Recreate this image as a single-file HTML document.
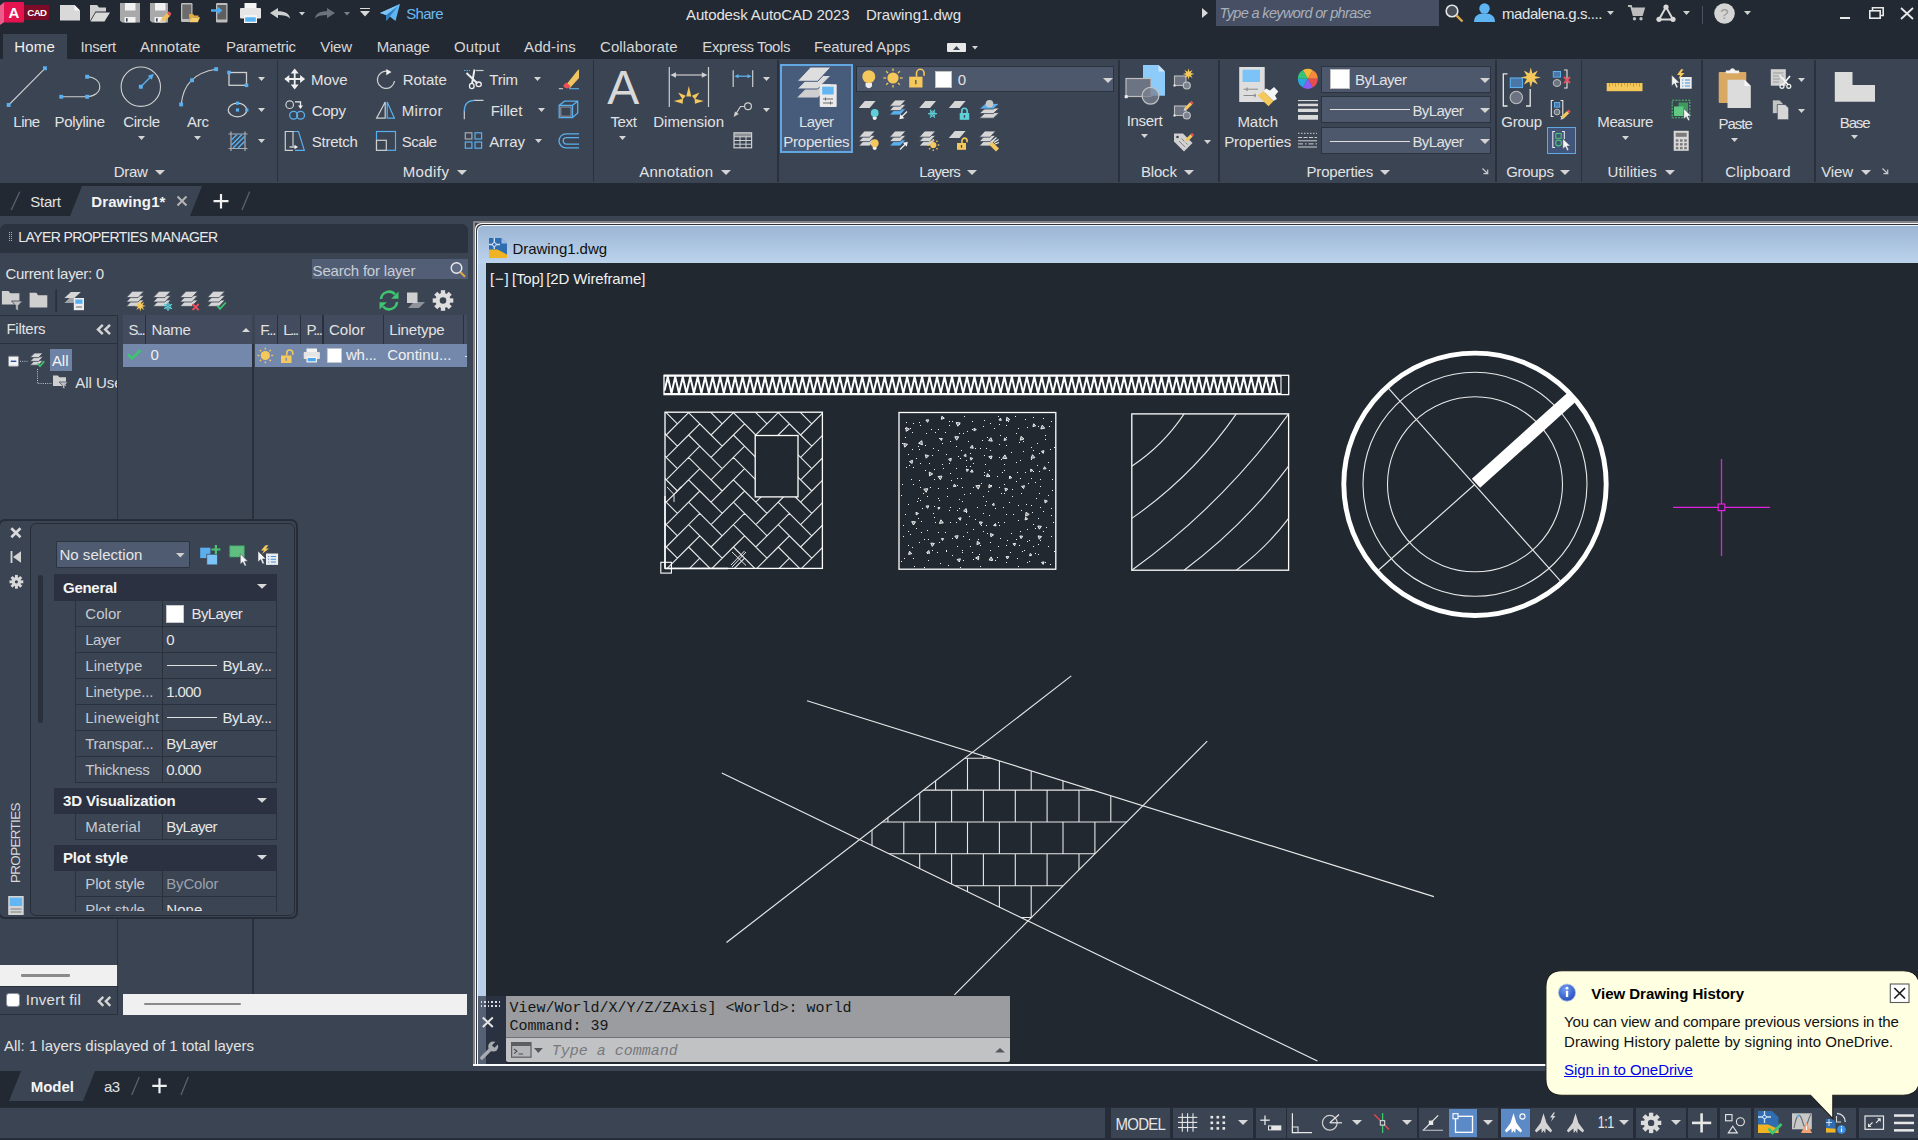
<!DOCTYPE html>
<html><head><meta charset="utf-8"><title>Autodesk AutoCAD 2023 Drawing1.dwg</title>
<style>
html,body{margin:0;padding:0}
body{width:1918px;height:1140px;position:relative;overflow:hidden;background:#3b4453;font-family:"Liberation Sans",sans-serif;}
.t{position:absolute;white-space:pre;display:block}
.r{position:absolute;display:block}
svg{overflow:visible}
</style></head><body>
<div class="r" style="left:0px;top:0px;width:1918px;height:59px;background:#222933;"></div>
<div class="r" style="left:3px;top:34px;width:64px;height:26px;background:#3b4453;"></div>
<div class="r" style="left:0px;top:183px;width:1918px;height:33px;background:#222933;"></div>
<svg class="r" style="left:0px;top:183px;" width="300" height="33" viewBox="0 0 300 33"><path d="M70 33L82 3H202L190 33Z" fill="#3b4453"/></svg>
<div class="r" style="left:0px;top:224px;width:468px;height:28.5px;background:#2c3340;border-radius:6px 6px 0 0;"></div>
<div class="r" style="left:473px;top:221px;width:1445px;height:842.8px;background:#858585;border-radius:1px 0 0 0;"></div>
<div class="r" style="left:475px;top:223px;width:1443px;height:840.8px;background:#f4f6f8;border-radius:5px 0 0 0;"></div>
<div class="r" style="left:475px;top:223px;width:6px;height:6px;background:#3d4350;"></div>
<div class="r" style="left:475px;top:223px;width:1443px;height:840.8px;background:#f4f6f8;border-radius:6px 0 0 0;"></div>
<div class="r" style="left:476px;top:224px;width:1442px;height:839.8px;background:#30353d;border-radius:6px 0 0 0;"></div>
<div class="r" style="left:477px;top:225px;width:1441px;height:838.8px;background:#f4f8fc;border-radius:6px 0 0 0;"></div>
<div class="r" style="left:478px;top:226px;width:1440px;height:837.8px;background:linear-gradient(#9bb5d4,#bcd3ec 37px,#b7cfe9 38px);border-radius:5px 0 0 0;"></div>
<div class="r" style="left:486px;top:263px;width:1432px;height:800.8px;background:#212830;"></div>
<div class="r" style="left:473px;top:1063.8px;width:1445px;height:2.3px;background:#fbfcfe;"></div>
<div class="r" style="left:0px;top:1070.6px;width:1918px;height:37px;background:#222933;"></div>
<svg class="r" style="left:0px;top:1070.6px;" width="120" height="37" viewBox="0 0 120 37"><path d="M9 30L21 0H95L83 30Z" fill="#3b4453"/></svg>
<span class="t" style="left:686.00px;top:7.30px;font-size:15px;line-height:15px;color:#e4e4e4;letter-spacing:-0.116px;">Autodesk AutoCAD 2023</span>
<span class="t" style="left:866.00px;top:7.30px;font-size:15px;line-height:15px;color:#e4e4e4;letter-spacing:-0.004px;">Drawing1.dwg</span>
<span class="t" style="left:406.30px;top:6.30px;font-size:15px;line-height:15px;color:#6db9f2;letter-spacing:-0.705px;">Share</span>
<div class="r" style="left:1216px;top:0px;width:223px;height:26px;background:#464f64;"></div>
<span class="t" style="left:1219.60px;top:5.73px;font-size:14.5px;line-height:14.5px;color:#aab0ba;letter-spacing:-0.648px;font-style:italic;">Type a keyword or phrase</span>
<svg class="r" style="left:1202px;top:8px;" width="6" height="10" viewBox="0 0 6 10"><path d="M0 0L6 5L0 10Z" fill="#d8d8d8"/></svg>
<span class="t" style="left:1502.00px;top:5.80px;font-size:15px;line-height:15px;color:#e4e4e4;letter-spacing:-0.420px;">madalena.g.s....</span>
<svg class="r" style="left:1606.5px;top:11px;" width="7" height="4" viewBox="0 0 7 4"><path d="M0 0H7L3.5 4Z" fill="#d0d0d0"/></svg>
<svg class="r" style="left:1682.5px;top:11px;" width="7" height="4" viewBox="0 0 7 4"><path d="M0 0H7L3.5 4Z" fill="#d0d0d0"/></svg>
<svg class="r" style="left:1744px;top:11px;" width="7" height="4" viewBox="0 0 7 4"><path d="M0 0H7L3.5 4Z" fill="#d0d0d0"/></svg>
<div class="r" style="left:1702px;top:6px;width:1px;height:18px;background:#4a5262;"></div>
<div class="r" style="left:1840px;top:17px;width:10px;height:2px;background:#e8e8e8;"></div>
<svg class="r" style="left:1869px;top:7px;" width="15" height="12" viewBox="0 0 15 12"><path d="M3.5 3V0.8H14.2V8.5H11.5" fill="none" stroke="#e8e8e8" stroke-width="1.6"/><rect x="0.8" y="3.8" width="10.4" height="7.4" fill="none" stroke="#e8e8e8" stroke-width="1.6"/></svg>
<svg class="r" style="left:1900px;top:7px;" width="14" height="13" viewBox="0 0 14 13"><path d="M1 1L13 12M13 1L1 12" stroke="#e8e8e8" stroke-width="1.8" fill="none"/></svg>
<span class="t" style="left:14.20px;top:38.60px;font-size:15px;line-height:15px;color:#f0f0f0;letter-spacing:0.197px;">Home</span>
<span class="t" style="left:80.50px;top:38.60px;font-size:15px;line-height:15px;color:#d6d6d6;letter-spacing:-0.369px;">Insert</span>
<span class="t" style="left:140.00px;top:38.60px;font-size:15px;line-height:15px;color:#d6d6d6;letter-spacing:0.056px;">Annotate</span>
<span class="t" style="left:226.00px;top:38.60px;font-size:15px;line-height:15px;color:#d6d6d6;letter-spacing:-0.272px;">Parametric</span>
<span class="t" style="left:320.30px;top:38.60px;font-size:15px;line-height:15px;color:#d6d6d6;letter-spacing:-0.136px;">View</span>
<span class="t" style="left:376.70px;top:38.60px;font-size:15px;line-height:15px;color:#d6d6d6;letter-spacing:-0.201px;">Manage</span>
<span class="t" style="left:454.00px;top:38.60px;font-size:15px;line-height:15px;color:#d6d6d6;letter-spacing:0.112px;">Output</span>
<span class="t" style="left:524.00px;top:38.60px;font-size:15px;line-height:15px;color:#d6d6d6;letter-spacing:0.134px;">Add-ins</span>
<span class="t" style="left:600.00px;top:38.60px;font-size:15px;line-height:15px;color:#d6d6d6;letter-spacing:0.090px;">Collaborate</span>
<span class="t" style="left:702.30px;top:38.60px;font-size:15px;line-height:15px;color:#d6d6d6;letter-spacing:-0.415px;">Express Tools</span>
<span class="t" style="left:814.00px;top:38.60px;font-size:15px;line-height:15px;color:#d6d6d6;letter-spacing:-0.120px;">Featured Apps</span>
<div class="r" style="left:947px;top:43px;width:19px;height:9px;background:#e8e8e8;border-radius:1px;"></div>
<svg class="r" style="left:953px;top:45.5px;" width="7" height="4" viewBox="0 0 7 4"><path d="M0 4H7L3.5 0Z" fill="#3b4453"/></svg>
<svg class="r" style="left:971.5px;top:45.5px;" width="6" height="3.5" viewBox="0 0 6 3.5"><path d="M0 0H6L3 3.5Z" fill="#d0d0d0"/></svg>
<svg class="r" style="left:0px;top:0px;" width="50" height="26" viewBox="0 0 50 26"><path d="M0 5.5L4 2.2V22.3L0 25Z" fill="#ea5c8b"/><rect x="4" y="2" width="20" height="20.5" rx="1" fill="#e5134f"/><rect x="24" y="5" width="25" height="15" fill="#7b0b26"/></svg>
<span class="t" style="left:8.60px;top:5.30px;font-size:15px;line-height:15px;color:#ffffff;font-weight:700;">A</span>
<span class="t" style="left:27.30px;top:7.87px;font-size:9.6px;line-height:9.6px;color:#ffffff;letter-spacing:-0.599px;font-weight:700;">CAD</span>
<svg class="r" style="left:60px;top:5px;" width="20" height="15.5" viewBox="0 0 20 15.5"><path d="M0 0H14.5L20 5.5V15.5H0Z" fill="#d9d9d9"/><path d="M14.5 0V5.5H20Z" fill="#f6f6f6"/></svg>
<svg class="r" style="left:90px;top:4.5px;" width="20" height="16.5" viewBox="0 0 20 16.5"><path d="M0 0H7L9 2.5H16V6.5H5.5L0 16Z" fill="#cfcfcf"/><path d="M5.8 7.5H20L14.5 16.5H0.5Z" fill="#d9d9d9"/></svg>
<svg class="r" style="left:120px;top:3px;overflow:hidden;" width="20" height="19.5" viewBox="0 0 20 19.5"><path d="M0 0H20V19.5H2L0 17.5Z" fill="#a9a9a9"/><rect x="5" y="0" width="10.5" height="7.5" fill="#f2f2f2"/><rect x="4.5" y="14" width="11" height="5.5" fill="#f2f2f2"/><rect x="6" y="15.2" width="1.6" height="3.4" fill="#3b4453"/></svg>
<svg class="r" style="left:150px;top:3px;overflow:hidden;" width="17.6" height="19.5" viewBox="0 0 17.6 19.5"><path d="M0 0H20V19.5H2L0 17.5Z" fill="#a9a9a9"/><rect x="5" y="0" width="10.5" height="7.5" fill="#f2f2f2"/><rect x="4.5" y="14" width="11" height="5.5" fill="#f2f2f2"/><rect x="6" y="15.2" width="1.6" height="3.4" fill="#3b4453"/></svg>
<svg class="r" style="left:159px;top:12px;" width="12" height="12" viewBox="0 0 12 12"><path d="M1 11L2.2 6.8L8 1L11 4L5.2 9.8Z" fill="#f0c060"/><path d="M8 1L9.3 -0.3Q10 -0.8 10.8 0L12 1.3Q12.6 2 12 2.7L11 4Z" fill="#e8575a"/><path d="M1 11L2.2 6.8L5.2 9.8Z" fill="#cfcfcf"/></svg>
<svg class="r" style="left:181px;top:3px;" width="19" height="20" viewBox="0 0 19 20"><rect x="0" y="0" width="11.5" height="19" rx="1.2" fill="#bdbdbd"/><rect x="1.3" y="1.5" width="9" height="14.5" fill="#6b6b6b"/><path d="M8 11H12L13.3 12.5H17.5V14H10.5L8.3 19Z" fill="#e0a93a"/><path d="M10.8 14.3H19L16.8 19.2H8.5Z" fill="#f7cd6c"/></svg>
<svg class="r" style="left:211px;top:2.5px;" width="17" height="19.5" viewBox="0 0 17 19.5"><rect x="5" y="0" width="11.5" height="19.5" rx="1.2" fill="#bdbdbd"/><rect x="6.3" y="2" width="9" height="14.5" fill="#5e5e5e"/><path d="M0 6.2H6.5V3.5L11.5 7.5L6.5 11.5V8.8H0Z" fill="#4da8ee"/></svg>
<svg class="r" style="left:239.5px;top:3px;" width="21" height="20" viewBox="0 0 21 20"><rect x="4.5" y="0" width="12" height="6" fill="#f4f4f4"/><rect x="0" y="5" width="21" height="10.5" rx="1" fill="#e6e6e6"/><rect x="4" y="12" width="13" height="8" fill="#f4f4f4"/><rect x="5.2" y="14.3" width="10.6" height="4.4" fill="#58b4f2"/></svg>
<svg class="r" style="left:270px;top:8px;" width="20" height="10.5" viewBox="0 0 20 10.5"><path d="M0 5L8 0V3.2C15 3.2 19.5 5.5 20 10.5C17.5 7.8 13.5 7 8 7V10.2Z" fill="#cfcfcf"/></svg>
<svg class="r" style="left:314.5px;top:8px;transform:scaleX(-1);" width="20" height="10.5" viewBox="0 0 20 10.5"><path d="M0 5L8 0V3.2C15 3.2 19.5 5.5 20 10.5C17.5 7.8 13.5 7 8 7V10.2Z" fill="#6c717b"/></svg>
<svg class="r" style="left:299px;top:11.5px;" width="6" height="3.5" viewBox="0 0 6 3.5"><path d="M0 0H6L3 3.5Z" fill="#cfcfcf"/></svg>
<svg class="r" style="left:344.3px;top:11.5px;" width="6" height="3.5" viewBox="0 0 6 3.5"><path d="M0 0H6L3 3.5Z" fill="#7b8089"/></svg>
<div class="r" style="left:360px;top:7.5px;width:10px;height:1.8px;background:#d8d8d8;"></div>
<svg class="r" style="left:360px;top:11px;" width="10" height="5.5" viewBox="0 0 10 5.5"><path d="M0 0H10L5 5.5Z" fill="#d8d8d8"/></svg>
<svg class="r" style="left:380px;top:3.5px;" width="20" height="17.5" viewBox="0 0 20 17.5"><path d="M0 9L20 0L15.5 17L9.8 12.6L6.5 16.8L6 11Z" fill="#5fb5f1"/><path d="M6 11L17.5 2.5L9.8 12.6L6.5 16.8Z" fill="#2f7fc2"/><path d="M0 9L20 0L6 11Z" fill="#7cc6f7"/></svg>
<svg class="r" style="left:1445px;top:4px;" width="19" height="19" viewBox="0 0 19 19"><circle cx="7" cy="7" r="5.8" fill="#474d59" stroke="#e6e6e6" stroke-width="1.6"/><path d="M11.3 11.3L17.5 17.5" stroke="#e3a94b" stroke-width="2.4"/></svg>
<svg class="r" style="left:1474px;top:3px;" width="21" height="19" viewBox="0 0 21 19"><circle cx="10.5" cy="5.5" r="5.2" fill="#5fb5f1"/><path d="M0 19C0 12 5 10.5 10.5 10.5S21 12 21 19Z" fill="#5fb5f1"/></svg>
<svg class="r" style="left:1628px;top:5px;" width="17" height="16" viewBox="0 0 17 16"><path d="M0 1H3L5.5 10H14L16 3.5H4" fill="none" stroke="#bdbdbd" stroke-width="1.8"/><path d="M4 3.5H16L14 10H5.5Z" fill="#bdbdbd"/><circle cx="6.5" cy="13.8" r="1.7" fill="#bdbdbd"/><circle cx="13" cy="13.8" r="1.7" fill="#bdbdbd"/></svg>
<svg class="r" style="left:1656px;top:3.5px;" width="20" height="18" viewBox="0 0 20 18"><path d="M10 3L3 15.5H17Z" fill="none" stroke="#d8d8d8" stroke-width="2"/><circle cx="10" cy="3" r="2.6" fill="#d8d8d8"/><circle cx="3" cy="15.3" r="2.6" fill="#d8d8d8"/><circle cx="17" cy="15.3" r="2.6" fill="#d8d8d8"/></svg>
<svg class="r" style="left:1713.5px;top:2.5px;" width="21" height="21" viewBox="0 0 21 21"><circle cx="10.5" cy="10.5" r="10.3" fill="#d4d4d4"/></svg>
<span class="t" style="left:1720.30px;top:5.60px;font-size:15px;line-height:15px;color:#9a9a9a;">?</span>
<div class="r" style="left:276.5px;top:60px;width:1.5px;height:122px;background:#2a313d;"></div>
<div class="r" style="left:592.5px;top:60px;width:1.5px;height:122px;background:#2a313d;"></div>
<div class="r" style="left:777px;top:60px;width:1.5px;height:122px;background:#2a313d;"></div>
<div class="r" style="left:1118px;top:60px;width:1.5px;height:122px;background:#2a313d;"></div>
<div class="r" style="left:1218px;top:60px;width:1.5px;height:122px;background:#2a313d;"></div>
<div class="r" style="left:1495px;top:60px;width:1.5px;height:122px;background:#2a313d;"></div>
<div class="r" style="left:1580.5px;top:60px;width:1.5px;height:122px;background:#2a313d;"></div>
<div class="r" style="left:1701px;top:60px;width:1.5px;height:122px;background:#2a313d;"></div>
<div class="r" style="left:1814px;top:60px;width:1.5px;height:122px;background:#2a313d;"></div>
<div class="r" style="left:779.7px;top:64px;width:73px;height:88.7px;background:#475b7b;border:2px solid #62a6e2;box-sizing:border-box;"></div>
<div class="r" style="left:855.5px;top:65.8px;width:258.7px;height:26.6px;background:#4d586d;border:1px solid #2c3340;box-sizing:border-box;"></div>
<div class="r" style="left:934.5px;top:70.5px;width:17px;height:17px;background:#ffffff;border:1px solid #c0c0c0;box-sizing:border-box;"></div>
<span class="t" style="left:957.70px;top:72.30px;font-size:15px;line-height:15px;color:#e2e2e2;">0</span>
<svg class="r" style="left:1102.5px;top:77.5px;" width="10" height="5" viewBox="0 0 10 5"><path d="M0 0H10L5 5Z" fill="#d4d4d4"/></svg>
<div class="r" style="left:1321.2px;top:65.5px;width:170.2px;height:27px;background:#4d586d;border:1px solid #2c3340;box-sizing:border-box;"></div>
<svg class="r" style="left:1479.5px;top:77.5px;" width="10" height="5" viewBox="0 0 10 5"><path d="M0 0H10L5 5Z" fill="#d4d4d4"/></svg>
<div class="r" style="left:1321.2px;top:96.3px;width:170.2px;height:27px;background:#4d586d;border:1px solid #2c3340;box-sizing:border-box;"></div>
<svg class="r" style="left:1479.5px;top:108.3px;" width="10" height="5" viewBox="0 0 10 5"><path d="M0 0H10L5 5Z" fill="#d4d4d4"/></svg>
<div class="r" style="left:1321.2px;top:127.2px;width:170.2px;height:27px;background:#4d586d;border:1px solid #2c3340;box-sizing:border-box;"></div>
<svg class="r" style="left:1479.5px;top:139.2px;" width="10" height="5" viewBox="0 0 10 5"><path d="M0 0H10L5 5Z" fill="#d4d4d4"/></svg>
<div class="r" style="left:1329.7px;top:68.8px;width:20.2px;height:20.2px;background:#ffffff;border:1px solid #c0c0c0;box-sizing:border-box;"></div>
<span class="t" style="left:1355.00px;top:72.30px;font-size:15px;line-height:15px;color:#e2e2e2;letter-spacing:-0.518px;">ByLayer</span>
<div class="r" style="left:1329.7px;top:109px;width:80px;height:1.3px;background:#e0e0e0;"></div>
<span class="t" style="left:1412.50px;top:102.60px;font-size:15px;line-height:15px;color:#e2e2e2;letter-spacing:-0.647px;">ByLayer</span>
<div class="r" style="left:1329.7px;top:140.7px;width:80px;height:1.3px;background:#e0e0e0;"></div>
<span class="t" style="left:1412.50px;top:134.30px;font-size:15px;line-height:15px;color:#e2e2e2;letter-spacing:-0.647px;">ByLayer</span>
<div class="r" style="left:1547px;top:127px;width:29.2px;height:26.8px;background:#41557a;border:1.6px solid #62a6e2;box-sizing:border-box;"></div>
<span class="t" style="left:13.30px;top:114.10px;font-size:15px;line-height:15px;color:#e2e2e2;letter-spacing:-0.490px;">Line</span>
<span class="t" style="left:54.50px;top:114.10px;font-size:15px;line-height:15px;color:#e2e2e2;letter-spacing:-0.291px;">Polyline</span>
<span class="t" style="left:123.30px;top:114.10px;font-size:15px;line-height:15px;color:#e2e2e2;letter-spacing:-0.323px;">Circle</span>
<span class="t" style="left:187.00px;top:114.10px;font-size:15px;line-height:15px;color:#e2e2e2;letter-spacing:-0.267px;">Arc</span>
<span class="t" style="left:610.50px;top:114.10px;font-size:15px;line-height:15px;color:#e2e2e2;letter-spacing:-0.377px;">Text</span>
<span class="t" style="left:653.30px;top:114.10px;font-size:15px;line-height:15px;color:#e2e2e2;letter-spacing:-0.018px;">Dimension</span>
<span class="t" style="left:799.00px;top:114.10px;font-size:15px;line-height:15px;color:#e2e2e2;letter-spacing:-0.644px;">Layer</span>
<span class="t" style="left:1237.40px;top:114.10px;font-size:15px;line-height:15px;color:#e2e2e2;letter-spacing:-0.049px;">Match</span>
<span class="t" style="left:1501.20px;top:114.10px;font-size:15px;line-height:15px;color:#e2e2e2;letter-spacing:-0.198px;">Group</span>
<span class="t" style="left:1597.30px;top:114.10px;font-size:15px;line-height:15px;color:#e2e2e2;letter-spacing:-0.380px;">Measure</span>
<span class="t" style="left:1126.70px;top:112.70px;font-size:15px;line-height:15px;color:#e2e2e2;letter-spacing:-0.319px;">Insert</span>
<span class="t" style="left:1839.80px;top:114.80px;font-size:15px;line-height:15px;color:#e2e2e2;letter-spacing:-1.147px;">Base</span>
<span class="t" style="left:1718.40px;top:115.60px;font-size:15px;line-height:15px;color:#e2e2e2;letter-spacing:-0.991px;">Paste</span>
<span class="t" style="left:783.30px;top:134.00px;font-size:15px;line-height:15px;color:#e2e2e2;letter-spacing:-0.236px;">Properties</span>
<span class="t" style="left:1224.20px;top:134.30px;font-size:15px;line-height:15px;color:#e2e2e2;letter-spacing:-0.156px;">Properties</span>
<svg class="r" style="left:137.5px;top:136.3px;" width="7" height="4" viewBox="0 0 7 4"><path d="M0 0H7L3.5 4Z" fill="#d4d4d4"/></svg>
<svg class="r" style="left:194.3px;top:136.3px;" width="7" height="4" viewBox="0 0 7 4"><path d="M0 0H7L3.5 4Z" fill="#d4d4d4"/></svg>
<svg class="r" style="left:619.2px;top:136.3px;" width="7" height="4" viewBox="0 0 7 4"><path d="M0 0H7L3.5 4Z" fill="#d4d4d4"/></svg>
<svg class="r" style="left:1140.8px;top:133.5px;" width="7" height="4" viewBox="0 0 7 4"><path d="M0 0H7L3.5 4Z" fill="#d4d4d4"/></svg>
<svg class="r" style="left:1621.9px;top:136px;" width="7" height="4" viewBox="0 0 7 4"><path d="M0 0H7L3.5 4Z" fill="#d4d4d4"/></svg>
<svg class="r" style="left:1731.2px;top:137.5px;" width="7" height="4" viewBox="0 0 7 4"><path d="M0 0H7L3.5 4Z" fill="#d4d4d4"/></svg>
<svg class="r" style="left:1851.1px;top:135.3px;" width="7" height="4" viewBox="0 0 7 4"><path d="M0 0H7L3.5 4Z" fill="#d4d4d4"/></svg>
<span class="t" style="left:311.00px;top:71.80px;font-size:15px;line-height:15px;color:#e2e2e2;letter-spacing:0.005px;">Move</span>
<span class="t" style="left:311.70px;top:102.80px;font-size:15px;line-height:15px;color:#e2e2e2;letter-spacing:-0.254px;">Copy</span>
<span class="t" style="left:311.70px;top:134.00px;font-size:15px;line-height:15px;color:#e2e2e2;letter-spacing:-0.217px;">Stretch</span>
<span class="t" style="left:402.70px;top:71.80px;font-size:15px;line-height:15px;color:#e2e2e2;letter-spacing:-0.032px;">Rotate</span>
<span class="t" style="left:401.70px;top:102.80px;font-size:15px;line-height:15px;color:#e2e2e2;letter-spacing:0.307px;">Mirror</span>
<span class="t" style="left:401.70px;top:134.00px;font-size:15px;line-height:15px;color:#e2e2e2;letter-spacing:-0.504px;">Scale</span>
<span class="t" style="left:489.30px;top:71.80px;font-size:15px;line-height:15px;color:#e2e2e2;letter-spacing:-0.257px;">Trim</span>
<span class="t" style="left:490.70px;top:102.80px;font-size:15px;line-height:15px;color:#e2e2e2;letter-spacing:-0.012px;">Fillet</span>
<span class="t" style="left:489.30px;top:134.00px;font-size:15px;line-height:15px;color:#e2e2e2;letter-spacing:-0.028px;">Array</span>
<svg class="r" style="left:533.5px;top:76.5px;" width="7" height="4" viewBox="0 0 7 4"><path d="M0 0H7L3.5 4Z" fill="#d4d4d4"/></svg>
<svg class="r" style="left:537.5px;top:107.5px;" width="7" height="4" viewBox="0 0 7 4"><path d="M0 0H7L3.5 4Z" fill="#d4d4d4"/></svg>
<svg class="r" style="left:535px;top:138.5px;" width="7" height="4" viewBox="0 0 7 4"><path d="M0 0H7L3.5 4Z" fill="#d4d4d4"/></svg>
<svg class="r" style="left:257.5px;top:77px;" width="7" height="4" viewBox="0 0 7 4"><path d="M0 0H7L3.5 4Z" fill="#d4d4d4"/></svg>
<svg class="r" style="left:257.5px;top:108px;" width="7" height="4" viewBox="0 0 7 4"><path d="M0 0H7L3.5 4Z" fill="#d4d4d4"/></svg>
<svg class="r" style="left:257.5px;top:139px;" width="7" height="4" viewBox="0 0 7 4"><path d="M0 0H7L3.5 4Z" fill="#d4d4d4"/></svg>
<svg class="r" style="left:763px;top:77px;" width="7" height="4" viewBox="0 0 7 4"><path d="M0 0H7L3.5 4Z" fill="#d4d4d4"/></svg>
<svg class="r" style="left:763px;top:108px;" width="7" height="4" viewBox="0 0 7 4"><path d="M0 0H7L3.5 4Z" fill="#d4d4d4"/></svg>
<svg class="r" style="left:1203.5px;top:139.5px;" width="7" height="4" viewBox="0 0 7 4"><path d="M0 0H7L3.5 4Z" fill="#d4d4d4"/></svg>
<svg class="r" style="left:1798px;top:77.5px;" width="7" height="4" viewBox="0 0 7 4"><path d="M0 0H7L3.5 4Z" fill="#d4d4d4"/></svg>
<svg class="r" style="left:1798px;top:108.5px;" width="7" height="4" viewBox="0 0 7 4"><path d="M0 0H7L3.5 4Z" fill="#d4d4d4"/></svg>
<span class="t" style="left:113.80px;top:163.60px;font-size:15px;line-height:15px;color:#e2e2e2;letter-spacing:-0.326px;">Draw</span>
<svg class="r" style="left:155px;top:170px;" width="10" height="5" viewBox="0 0 10 5"><path d="M0 0H10L5 5Z" fill="#d4d4d4"/></svg>
<span class="t" style="left:402.70px;top:163.60px;font-size:15px;line-height:15px;color:#e2e2e2;letter-spacing:0.403px;">Modify</span>
<svg class="r" style="left:456.7px;top:170px;" width="10" height="5" viewBox="0 0 10 5"><path d="M0 0H10L5 5Z" fill="#d4d4d4"/></svg>
<span class="t" style="left:639.30px;top:163.60px;font-size:15px;line-height:15px;color:#e2e2e2;letter-spacing:0.228px;">Annotation</span>
<svg class="r" style="left:721px;top:170px;" width="10" height="5" viewBox="0 0 10 5"><path d="M0 0H10L5 5Z" fill="#d4d4d4"/></svg>
<span class="t" style="left:919.30px;top:163.60px;font-size:15px;line-height:15px;color:#e2e2e2;letter-spacing:-0.720px;">Layers</span>
<svg class="r" style="left:966.7px;top:170px;" width="10" height="5" viewBox="0 0 10 5"><path d="M0 0H10L5 5Z" fill="#d4d4d4"/></svg>
<span class="t" style="left:1141.00px;top:163.60px;font-size:15px;line-height:15px;color:#e2e2e2;letter-spacing:-0.196px;">Block</span>
<svg class="r" style="left:1184.3px;top:170px;" width="10" height="5" viewBox="0 0 10 5"><path d="M0 0H10L5 5Z" fill="#d4d4d4"/></svg>
<span class="t" style="left:1306.50px;top:163.60px;font-size:15px;line-height:15px;color:#e2e2e2;letter-spacing:-0.186px;">Properties</span>
<svg class="r" style="left:1379.8px;top:170px;" width="10" height="5" viewBox="0 0 10 5"><path d="M0 0H10L5 5Z" fill="#d4d4d4"/></svg>
<span class="t" style="left:1506.20px;top:163.60px;font-size:15px;line-height:15px;color:#e2e2e2;letter-spacing:-0.298px;">Groups</span>
<svg class="r" style="left:1560px;top:170px;" width="10" height="5" viewBox="0 0 10 5"><path d="M0 0H10L5 5Z" fill="#d4d4d4"/></svg>
<span class="t" style="left:1607.50px;top:163.60px;font-size:15px;line-height:15px;color:#e2e2e2;letter-spacing:0.118px;">Utilities</span>
<svg class="r" style="left:1664.5px;top:170px;" width="10" height="5" viewBox="0 0 10 5"><path d="M0 0H10L5 5Z" fill="#d4d4d4"/></svg>
<span class="t" style="left:1725.20px;top:163.60px;font-size:15px;line-height:15px;color:#e2e2e2;letter-spacing:0.155px;">Clipboard</span>
<span class="t" style="left:1821.20px;top:163.60px;font-size:15px;line-height:15px;color:#e2e2e2;letter-spacing:-0.086px;">View</span>
<svg class="r" style="left:1861px;top:170px;" width="10" height="5" viewBox="0 0 10 5"><path d="M0 0H10L5 5Z" fill="#d4d4d4"/></svg>
<svg class="r" style="left:1482px;top:168.3px;" width="7" height="7" viewBox="0 0 7 7"><path d="M0.5 0.5L5 5M5.7 1.5V5.7H1.5" stroke="#c8c8c8" stroke-width="1.2" fill="none"/></svg>
<svg class="r" style="left:1882.3px;top:168.3px;" width="7" height="7" viewBox="0 0 7 7"><path d="M0.5 0.5L5 5M5.7 1.5V5.7H1.5" stroke="#c8c8c8" stroke-width="1.2" fill="none"/></svg>
<svg class="r" style="left:0px;top:0px;" width="1918" height="190" viewBox="0 0 1918 190"><path d="M8.7 105L45 68.3" stroke="#cfcfcf" stroke-width="1.1"/><rect x="6.7" y="103.0" width="3.9" height="3.9" fill="#5ab0ee"/><rect x="43.0" y="66.3" width="3.9" height="3.9" fill="#5ab0ee"/><path d="M61.3 96.7H87.2A12.6 10 0 0 0 87.2 76.7" fill="none" stroke="#cfcfcf" stroke-width="1.1"/><rect x="59.3" y="94.8" width="3.9" height="3.9" fill="#5ab0ee"/><rect x="85.2" y="94.8" width="3.9" height="3.9" fill="#5ab0ee"/><rect x="85.2" y="74.8" width="3.9" height="3.9" fill="#5ab0ee"/><circle cx="140.8" cy="86.7" r="19.7" fill="none" stroke="#cfcfcf" stroke-width="1.1"/><path d="M140.8 86.7L151 76.5" stroke="#5ab0ee" stroke-width="1.4"/><path d="M153.8 73.7L147.8 75.7L151.8 79.7Z" fill="#5ab0ee"/><rect x="138.9" y="84.8" width="3.9" height="3.9" fill="#5ab0ee"/><path d="M181.2 104.5Q184 74 216.2 69.2" fill="none" stroke="#cfcfcf" stroke-width="1.1"/><rect x="179.2" y="102.5" width="3.9" height="3.9" fill="#5ab0ee"/><rect x="190.1" y="78.3" width="3.9" height="3.9" fill="#5ab0ee"/><rect x="214.2" y="67.2" width="3.9" height="3.9" fill="#5ab0ee"/><rect x="229" y="72.5" width="17.5" height="12.8" fill="none" stroke="#cfcfcf" stroke-width="1.3"/><rect x="227.2" y="70.7" width="3.6" height="3.6" fill="#5ab0ee"/><rect x="244.7" y="83.5" width="3.6" height="3.6" fill="#5ab0ee"/><ellipse cx="237.5" cy="110" rx="9.3" ry="6.8" fill="none" stroke="#cfcfcf" stroke-width="1.3"/><rect x="235.9" y="101.6" width="3.2" height="3.2" fill="#5ab0ee"/><rect x="235.9" y="108.4" width="3.2" height="3.2" fill="#5ab0ee"/><rect x="245.2" y="108.4" width="3.2" height="3.2" fill="#5ab0ee"/><path d="M231 131.5V151M245 131.5V151M228.5 134H247.5M228.5 148.5H247.5" stroke="#a8acb3" stroke-width="1.2"/><path d="M231.5 140L237 134.5M231.5 145L242 134.5M233 148L244.5 136.5M238 148L244.5 141.5" stroke="#5ab0ee" stroke-width="1.5"/><path d="M294.7 70V88M285.5 79H304" stroke="#f0f0f0" stroke-width="1.8"/><path d="M294.7 68.5L290.7 73.5H298.7ZM294.7 89.5L290.7 84.5H298.7ZM284.3 79L289.3 75V83ZM305.1 79L300.1 75V83Z" fill="#f0f0f0"/><circle cx="289.7" cy="104.7" r="3.8" fill="none" stroke="#cfcfcf" stroke-width="1.2"/><path d="M295 101.8H300.5V106" fill="none" stroke="#f0f0f0" stroke-width="1.3"/><path d="M300.5 109L298 105.5H303Z" fill="#f0f0f0"/><circle cx="293.6" cy="115.3" r="3.9" fill="none" stroke="#5ab0ee" stroke-width="1.3"/><circle cx="300.6" cy="115.3" r="3.9" fill="none" stroke="#5ab0ee" stroke-width="1.3"/><path d="M293 131.5H298.5L304.3 150.3H295" fill="none" stroke="#5ab0ee" stroke-width="1.2"/><path d="M293 146V131.5H285.3V150.3H293" fill="none" stroke="#cfcfcf" stroke-width="1.2"/><path d="M289.5 147H295.5" stroke="#f0f0f0" stroke-width="1.2"/><path d="M298 147L294.5 144.8V149.2Z" fill="#f0f0f0"/><path d="M386 71.2A8.6 8.6 0 1 0 394.6 79.8" fill="none" stroke="#cfcfcf" stroke-width="1.3" transform="rotate(8 386 79.8)"/><path d="M391.5 72L386.3 69V75.2Z" fill="#f0f0f0"/><path d="M385.2 102V118.2H376.6Z" fill="none" stroke="#cfcfcf" stroke-width="1.2"/><path d="M387.2 102V118.2H394.4Z" fill="none" stroke="#5ab0ee" stroke-width="1.2"/><rect x="376.5" y="131.5" width="19" height="18.8" fill="none" stroke="#5ab0ee" stroke-width="1.2"/><rect x="376.5" y="140.3" width="9.8" height="10" fill="#3b4453" stroke="#cfcfcf" stroke-width="1.2"/><path d="M464 70.5H470" stroke="#5ab0ee" stroke-width="1.2" stroke-dasharray="1.5 1"/><path d="M476 70.5H483.5" stroke="#cfcfcf" stroke-width="1.2"/><path d="M466.5 73L477.5 83.5M474.5 69.5L472 83.5" stroke="#f0f0f0" stroke-width="1.9"/><ellipse cx="471.8" cy="86" rx="2.3" ry="2.6" fill="none" stroke="#f0f0f0" stroke-width="1.3"/><ellipse cx="478.7" cy="84.3" rx="2.6" ry="2.3" fill="none" stroke="#f0f0f0" stroke-width="1.3"/><path d="M464.3 119.3V111M474 100.4H483.5" stroke="#cfcfcf" stroke-width="1.2" fill="none"/><path d="M464.3 111.5Q464.3 100.4 474.5 100.4" stroke="#5ab0ee" stroke-width="1.3" fill="none"/><rect x="465.3" y="132.8" width="6.6" height="6.2" fill="none" stroke="#a8acb3" stroke-width="1.2"/><rect x="475" y="132.8" width="6.6" height="6.2" fill="none" stroke="#5ab0ee" stroke-width="1.2"/><rect x="465.3" y="142" width="6.6" height="6.2" fill="none" stroke="#5ab0ee" stroke-width="1.2"/><rect x="475" y="142" width="6.6" height="6.2" fill="none" stroke="#5ab0ee" stroke-width="1.2"/><path d="M566 85L577.5 70.5L579 69.3V78L570 88Z" fill="#f1c45f"/><path d="M563.6 84.8Q562.8 86.5 564.5 87.6L567 88.5Q568.3 88.4 569 87.6L570.5 86L566.3 82.6Z" fill="#ea4f5c"/><path d="M558.8 88.7H563" stroke="#cfcfcf" stroke-width="1.1"/><path d="M569 88.7H579" stroke="#5ab0ee" stroke-width="1.1"/><path d="M559.2 105.3H572.5V117.6H559.2ZM559.2 105.3L564.5 101.2H577.7V113L572.5 117.6M572.5 105.3L577.7 101.2" fill="none" stroke="#5ab0ee" stroke-width="1.3"/><rect x="560.8" y="107" width="10.2" height="9.2" fill="none" stroke="#8f96a3" stroke-width="1"/><path d="M579 133.8H566A7 7 0 0 0 566 147.8H579" fill="none" stroke="#5ab0ee" stroke-width="1.3"/><path d="M579 137.6H566.5A3.3 3.3 0 0 0 566.5 144.2H579" fill="none" stroke="#5ab0ee" stroke-width="1.3"/></svg>
<svg class="r" style="left:0px;top:0px;" width="1918" height="190" viewBox="0 0 1918 190"><path d="M669.3 67V107M708.5 67V107" stroke="#cfcfcf" stroke-width="1.2"/><path d="M673 75H705" stroke="#cfcfcf" stroke-width="1.2"/><path d="M670.3 75L676 72.3V77.7ZM707.5 75L701.8 72.3V77.7Z" fill="#cfcfcf"/><path d="M688.8 86.0L691.3 96.5L686.3 96.5Z" fill="#f5c85c"/><path d="M678.1 92.5L685.8 95.7L682.6 99.6Z" fill="#f5c85c"/><path d="M699.5 92.5L695.0 99.6L691.8 95.7Z" fill="#f5c85c"/><path d="M673.8 101.0L682.9 98.8L682.7 103.8Z" fill="#f5c85c"/><path d="M703.8 101.0L694.9 103.8L694.7 98.8Z" fill="#f5c85c"/><path d="M733.2 70.3V87M752.7 70.3V87" stroke="#cfcfcf" stroke-width="1.2"/><path d="M736 76.2H750" stroke="#5ab0ee" stroke-width="1.3"/><path d="M734.2 76.2L738.5 74.2V78.2ZM751.7 76.2L747.4 74.2V78.2Z" fill="#5ab0ee"/><circle cx="748" cy="106.2" r="3.4" fill="none" stroke="#cfcfcf" stroke-width="1.2"/><path d="M744.6 106.5H740.5L735.5 114.5" fill="none" stroke="#cfcfcf" stroke-width="1.2"/><path d="M733.6 117L735 111.5L738.8 114Z" fill="#cfcfcf"/><rect x="734" y="132.8" width="17.6" height="15" fill="none" stroke="#cfcfcf" stroke-width="1.2"/><path d="M734 136.8H751.6M734 140.5H751.6M734 144.2H751.6M740 136.8V148M746 136.8V148" stroke="#cfcfcf" stroke-width="1"/><rect x="734" y="132.8" width="17.6" height="4" fill="#cfcfcf" opacity="0.55"/><path d="M797.2 97.5L810.5 84.0H831.0L817.7 97.5Z" fill="#cfcfcf"/><path d="M797.2 89.0L810.5 75.5H831.0L817.7 89.0Z" fill="#dcdcdc" stroke="#46597a" stroke-width="1"/><path d="M797.2 81.3L810.5 67.0H831.0L817.7 81.3Z" fill="#dedede" stroke="#46597a" stroke-width="1"/><rect x="819.7" y="84.2" width="17" height="22.8" rx="1" fill="#e9e9e9"/><rect x="822.2" y="86.7" width="11.5" height="7.8" fill="#62b6f3"/><path d="M823 99H833M823 103H833" stroke="#6a6a6a" stroke-width="1"/><path d="M825.5 97.5V100.5M830.5 101.5V104.5" stroke="#6a6a6a" stroke-width="1"/><circle cx="868.8" cy="76.7" r="6.5" fill="#f5c85c"/><path d="M865.55 82.875H872.05V86.125Q868.8 90.35 865.55 86.125Z" fill="#ececec"/><circle cx="893" cy="78" r="5.6" fill="#f5c85c"/><path d="M899.9 78.0L902.6 78.0" stroke="#f5c85c" stroke-width="1.3"/><path d="M897.9 82.9L899.8 84.8" stroke="#f5c85c" stroke-width="1.3"/><path d="M893.0 84.9L893.0 87.6" stroke="#f5c85c" stroke-width="1.3"/><path d="M888.1 82.9L886.2 84.8" stroke="#f5c85c" stroke-width="1.3"/><path d="M886.1 78.0L883.4 78.0" stroke="#f5c85c" stroke-width="1.3"/><path d="M888.1 73.1L886.2 71.2" stroke="#f5c85c" stroke-width="1.3"/><path d="M893.0 71.1L893.0 68.4" stroke="#f5c85c" stroke-width="1.3"/><path d="M897.9 73.1L899.8 71.2" stroke="#f5c85c" stroke-width="1.3"/><path d="M916.515 76.7V73.352A3.724 3.99 0 0 1 924.096 73.352V75.6956" fill="none" stroke="#f5c85c" stroke-width="1.6"/><rect x="909.2" y="76.7" width="13.3" height="10.8" fill="#f5c85c"/><rect x="915.2" y="79.94" width="1.3" height="4.32" fill="#4a5469"/><path d="M858.8 108.0L864.8 101.0H875.6L869.6 108.0Z" fill="#d6d6d6"/><circle cx="874.7" cy="113" r="3.9" fill="#5fd0d8"/><path d="M872.75 116.705H876.65V118.655Q874.7 121.19 872.75 118.655Z" fill="#ececec"/><path d="M889.5 115.0L895.0 108.8H905.8L900.3 115.0Z" fill="#5ab0ee" stroke="#3b4453" stroke-width="0.8"/><path d="M889.5 110.6L895.0 104.4H905.8L900.3 110.6Z" fill="#d6d6d6" stroke="#3b4453" stroke-width="0.8"/><path d="M889.5 106.2L895.0 100.0H905.8L900.3 106.2Z" fill="#d6d6d6" stroke="#3b4453" stroke-width="0.8"/><path d="M907 111.5L901.5 117" stroke="#f0f0f0" stroke-width="1.3"/><path d="M899.3 119.3L900.3 114.3L904.3 118.3Z" fill="#f0f0f0"/><path d="M919.2 108.0L925.2 101.0H936.0L930.0 108.0Z" fill="#d6d6d6"/><path d="M937.1 113.7L927.9 113.7" stroke="#5fd0d8" stroke-width="1.2"/><path d="M934.8 117.7L930.2 109.7" stroke="#5fd0d8" stroke-width="1.2"/><path d="M930.2 117.7L934.8 109.7" stroke="#5fd0d8" stroke-width="1.2"/><circle cx="932.5" cy="113.7" r="2.6" fill="none" stroke="#5fd0d8" stroke-width="0.9"/><path d="M948.8 108.0L954.8 101.0H965.6L959.6 108.0Z" fill="#d6d6d6"/><path d="M961.79 113V111.103A2.66 2.85 0 0 1 967.11 111.103V113" fill="none" stroke="#5fd0d8" stroke-width="1.6"/><rect x="959.7" y="113" width="9.5" height="6.8" fill="#5fd0d8"/><rect x="963.8" y="115.04" width="1.3" height="2.72" fill="#3b4453"/><path d="M979.3 118.2L985.3 112.7H999.3L993.3 118.2Z" fill="#d6d6d6" stroke="#3b4453" stroke-width="0.8"/><path d="M979.3 113.6L985.3 108.1H999.3L993.3 113.6Z" fill="#d6d6d6" stroke="#3b4453" stroke-width="0.8"/><path d="M979.3 109.0L985.3 103.5H999.3L993.3 109.0Z" fill="#5ab0ee" stroke="#3b4453" stroke-width="0.8"/><circle cx="989.5" cy="103.7" r="3.8" fill="#c8c8c8"/><path d="M858.8 146.0L864.3 139.8H875.1L869.6 146.0Z" fill="#d6d6d6" stroke="#3b4453" stroke-width="0.8"/><path d="M858.8 141.6L864.3 135.4H875.1L869.6 141.6Z" fill="#d6d6d6" stroke="#3b4453" stroke-width="0.8"/><path d="M858.8 137.2L864.3 131.0H875.1L869.6 137.2Z" fill="#d6d6d6" stroke="#3b4453" stroke-width="0.8"/><circle cx="874.7" cy="143.2" r="3.9" fill="#f5c85c"/><path d="M872.75 146.905H876.65V148.855Q874.7 151.39 872.75 148.855Z" fill="#ececec"/><path d="M889.5 146.0L895.0 139.8H905.8L900.3 146.0Z" fill="#5ab0ee" stroke="#3b4453" stroke-width="0.8"/><path d="M889.5 141.6L895.0 135.4H905.8L900.3 141.6Z" fill="#d6d6d6" stroke="#3b4453" stroke-width="0.8"/><path d="M889.5 137.2L895.0 131.0H905.8L900.3 137.2Z" fill="#d6d6d6" stroke="#3b4453" stroke-width="0.8"/><path d="M900 149.5L905.5 144" stroke="#f0f0f0" stroke-width="1.3"/><path d="M907.8 141.7L906.8 146.7L902.8 142.7Z" fill="#f0f0f0"/><path d="M919.2 146.0L924.7 139.8H935.5L930.0 146.0Z" fill="#d6d6d6" stroke="#3b4453" stroke-width="0.8"/><path d="M919.2 141.6L924.7 135.4H935.5L930.0 141.6Z" fill="#d6d6d6" stroke="#3b4453" stroke-width="0.8"/><path d="M919.2 137.2L924.7 131.0H935.5L930.0 137.2Z" fill="#d6d6d6" stroke="#3b4453" stroke-width="0.8"/><circle cx="933.3" cy="145" r="3.1" fill="#f5c85c"/><path d="M937.7 145.0L939.3 145.0" stroke="#f5c85c" stroke-width="1.3"/><path d="M936.4 148.1L937.5 149.2" stroke="#f5c85c" stroke-width="1.3"/><path d="M933.3 149.4L933.3 151.0" stroke="#f5c85c" stroke-width="1.3"/><path d="M930.2 148.1L929.1 149.2" stroke="#f5c85c" stroke-width="1.3"/><path d="M928.9 145.0L927.3 145.0" stroke="#f5c85c" stroke-width="1.3"/><path d="M930.2 141.9L929.1 140.8" stroke="#f5c85c" stroke-width="1.3"/><path d="M933.3 140.6L933.3 139.0" stroke="#f5c85c" stroke-width="1.3"/><path d="M936.4 141.9L937.5 140.8" stroke="#f5c85c" stroke-width="1.3"/><path d="M948.8 138.0L954.8 131.0H965.6L959.6 138.0Z" fill="#d6d6d6"/><path d="M961.95 143V140.892A2.52 2.7 0 0 1 967.08 140.892V142.368" fill="none" stroke="#f5c85c" stroke-width="1.6"/><rect x="957" y="143" width="9" height="6.8" fill="#f5c85c"/><rect x="960.85" y="145.04" width="1.3" height="2.72" fill="#3b4453"/><path d="M979.3 146.0L984.8 139.8H995.6L990.1 146.0Z" fill="#d6d6d6" stroke="#3b4453" stroke-width="0.8"/><path d="M979.3 141.6L984.8 135.4H995.6L990.1 141.6Z" fill="#d6d6d6" stroke="#3b4453" stroke-width="0.8"/><path d="M979.3 137.2L984.8 131.0H995.6L990.1 137.2Z" fill="#d6d6d6" stroke="#3b4453" stroke-width="0.8"/><path d="M989 144.5L992 141.5L999 148.5L996 151.5Z" fill="#f5c85c"/><path d="M992.5 141L996.5 137.5M994 142.5L998.5 139.5M995 144L999 142.5" stroke="#f0f0f0" stroke-width="1.1"/><path d="M1143 65H1158.5L1165 71.5V95.8H1143Z" fill="#8ccbfa"/><path d="M1158.5 65V71.5H1165Z" fill="#c9e6fc"/><rect x="1126" y="78.5" width="25" height="18" fill="#6c7382" stroke="#bdbdbd" stroke-width="1.2"/><circle cx="1150.5" cy="95.8" r="8.4" fill="#7a8190" fill-opacity="0.75" stroke="#c4c4c4" stroke-width="1.2"/><rect x="1124.7" y="95.2" width="3" height="3" fill="#f0f0f0"/><rect x="1174.5" y="76" width="11.5" height="9.5" fill="#6c7382" stroke="#bdbdbd" stroke-width="1.1"/><circle cx="1186.8" cy="85.5" r="3.5" fill="#7a8190" stroke="#c4c4c4" stroke-width="1.1"/><rect x="1173.5" y="84.5" width="2" height="2" fill="#f0f0f0"/><path d="M1188.5 68.2L1189.4 71.7L1192.6 69.9L1190.8 73.1L1194.3 74.0L1190.8 74.9L1192.6 78.1L1189.4 76.3L1188.5 79.8L1187.6 76.3L1184.4 78.1L1186.2 74.9L1182.7 74.0L1186.2 73.1L1184.4 69.9L1187.6 71.7Z" fill="#f5c85c"/><rect x="1174.5" y="106" width="11.5" height="9.5" fill="#6c7382" stroke="#bdbdbd" stroke-width="1.1"/><circle cx="1186.8" cy="115.5" r="3.5" fill="#7a8190" stroke="#c4c4c4" stroke-width="1.1"/><rect x="1173.5" y="114.5" width="2" height="2" fill="#f0f0f0"/><path d="M1184.5 107.8L1190 102.3L1192.2 104.5L1186.7 110L1184.5 107.8Z" fill="#f5c85c"/><path d="M1190 102.3L1191.5 100.8L1193.7 103L1192.2 104.5Z" fill="#ea4f5c"/><path d="M1183.5 111L1184.5 107.8L1186.7 110Z" fill="#d8d8d8"/><path d="M1174 133.5H1183L1192.5 143L1184 151.5L1174 141.5Z" fill="#d0d0d0"/><circle cx="1177.5" cy="137" r="1.3" fill="#3b4453"/><path d="M1179 141L1185 147M1181.5 138.5L1187.5 144.5" stroke="#7a7a7a" stroke-width="0.9"/><path d="M1185 139.8L1190.5 134.3L1192.7 136.5L1187.2 142L1185 139.8Z" fill="#f5c85c"/><path d="M1190.5 134.3L1192 132.8L1194.2 135L1192.7 136.5Z" fill="#ea4f5c"/><path d="M1184 143L1185 139.8L1187.2 142Z" fill="#d8d8d8"/></svg>
<span class="t" style="left:607.30px;top:63.57px;font-size:48px;line-height:48px;color:#d8d8d8;">A</span>
<svg class="r" style="left:0px;top:0px;" width="1918" height="190" viewBox="0 0 1918 190"><rect x="1239.2" y="67" width="25.5" height="35" fill="#dedede"/><rect x="1242.5" y="69.7" width="17.5" height="12.3" fill="#7cc4f8"/><path d="M1243.5 89.2H1258M1243.5 95.5H1256" stroke="#8a8a8a" stroke-width="1"/><path d="M1247 87.5V91M1255 93.7V97.3" stroke="#8a8a8a" stroke-width="1.3"/><path d="M1257.5 95.5L1263.5 91L1273.5 101L1268.5 106.3Z" fill="#f5c85c"/><path d="M1263.5 91L1266 88.5L1270 90.5L1274 87L1278.3 91.5L1275 95.5L1277 99L1273.5 101Z" fill="#f4f4f4"/><path d="M1307.8 78.8L1302.80 70.14A10 10 0 0 1 1312.80 70.14Z" fill="#f9b73a"/><path d="M1307.8 78.8L1312.80 70.14A10 10 0 0 1 1317.80 78.80Z" fill="#f58a3c"/><path d="M1307.8 78.8L1317.80 78.80A10 10 0 0 1 1312.80 87.46Z" fill="#e84d4d"/><path d="M1307.8 78.8L1312.80 87.46A10 10 0 0 1 1302.80 87.46Z" fill="#8b5cf6"/><path d="M1307.8 78.8L1302.80 87.46A10 10 0 0 1 1297.80 78.80Z" fill="#2aa7df"/><path d="M1307.8 78.8L1297.80 78.80A10 10 0 0 1 1302.80 70.14Z" fill="#34c47a"/><rect x="1298" y="100" width="20" height="1.1" fill="#dadada"/><rect x="1298" y="103.7" width="20" height="2.5" fill="#dadada"/><rect x="1298" y="108.7" width="20" height="3.3" fill="#dadada"/><rect x="1298" y="115" width="20" height="4.7" fill="#dadada"/><path d="M1298 133.3H1317" stroke="#cfcfcf" stroke-width="1" stroke-dasharray="1.5 1.5"/><path d="M1298 137.5H1317" stroke="#cfcfcf" stroke-width="1" stroke-dasharray="4 1.5"/><path d="M1298 140.8H1317" stroke="#cfcfcf" stroke-width="1"/><path d="M1298 143.9H1317" stroke="#cfcfcf" stroke-width="1" stroke-dasharray="5 2 1.5 2"/><path d="M1298 147H1317" stroke="#cfcfcf" stroke-width="1"/><path d="M1507.5 73.8H1503.3V106H1507.5" fill="none" stroke="#e8e8e8" stroke-width="1.3"/><path d="M1526 106H1530.2V89" fill="none" stroke="#e8e8e8" stroke-width="1.3"/><rect x="1510.3" y="78" width="12.2" height="9.5" fill="#4a76a8" stroke="#5ab0ee" stroke-width="1.1"/><circle cx="1516.3" cy="97.5" r="6.2" fill="#6c7382" stroke="#bdbdbd" stroke-width="1.1"/><path d="M1530.8 67.5L1532.4 73.6L1537.9 70.4L1534.7 75.9L1540.8 77.5L1534.7 79.1L1537.9 84.6L1532.4 81.4L1530.8 87.5L1529.2 81.4L1523.7 84.6L1526.9 79.1L1520.8 77.5L1526.9 75.9L1523.7 70.4L1529.2 73.6Z" fill="#f5c85c"/><path d="M1564 70H1567V88H1564" fill="none" stroke="#e8e8e8" stroke-width="1.1"/><rect x="1553.3" y="71.5" width="7.2" height="5.6" fill="#4a76a8" stroke="#5ab0ee" stroke-width="1"/><ellipse cx="1557" cy="83" rx="3.8" ry="3.5" fill="#6c7382" stroke="#bdbdbd" stroke-width="1"/><path d="M1564 77L1570 83M1570 77L1564 83" stroke="#ea4f5c" stroke-width="1.8"/><path d="M1553.5 100.5H1551.3V116.5H1553.5M1560.5 100.5H1562.8V116.5H1560.5" fill="none" stroke="#e8e8e8" stroke-width="1.1"/><rect x="1554.5" y="102.5" width="5.2" height="4.6" fill="#4a76a8" stroke="#5ab0ee" stroke-width="1"/><circle cx="1557" cy="112" r="2.9" fill="#6c7382" stroke="#bdbdbd" stroke-width="1"/><path d="M1561.5 116.5L1567 111L1569.2 113.2L1563.7 118.7L1561.5 116.5Z" fill="#f5c85c"/><path d="M1567 111L1568.5 109.5L1570.7 111.7L1569.2 113.2Z" fill="#ea4f5c"/><path d="M1560.5 119.7L1561.5 116.5L1563.7 118.7Z" fill="#d8d8d8"/><path d="M1555 131.5H1552.8V147.5H1555M1562 131.5H1564.3V139" fill="none" stroke="#e8e8e8" stroke-width="1.1"/><rect x="1555.8" y="133.5" width="5.4" height="4.8" fill="none" stroke="#4fc071" stroke-width="1.1"/><circle cx="1558.5" cy="143" r="2.9" fill="none" stroke="#4fc071" stroke-width="1.1"/><path d="M1562.8 138.5L1562.8 148.9L1565.3 146.7L1567.2 150.8L1568.9 150.1L1567.1 146.0L1570.4 146.0Z" fill="#f4f4f4" stroke="#3b4453" stroke-width="0.5"/><rect x="1606.7" y="83" width="35.8" height="8.2" fill="#f5c85c"/><path d="M1609.5 83V86.8" stroke="#c9962b" stroke-width="0.9"/><path d="M1612.5 83V85.3" stroke="#c9962b" stroke-width="0.9"/><path d="M1615.5 83V86.8" stroke="#c9962b" stroke-width="0.9"/><path d="M1618.5 83V85.3" stroke="#c9962b" stroke-width="0.9"/><path d="M1621.5 83V86.8" stroke="#c9962b" stroke-width="0.9"/><path d="M1624.5 83V85.3" stroke="#c9962b" stroke-width="0.9"/><path d="M1627.5 83V86.8" stroke="#c9962b" stroke-width="0.9"/><path d="M1630.5 83V85.3" stroke="#c9962b" stroke-width="0.9"/><path d="M1633.5 83V86.8" stroke="#c9962b" stroke-width="0.9"/><path d="M1636.5 83V85.3" stroke="#c9962b" stroke-width="0.9"/><path d="M1639.5 83V86.8" stroke="#c9962b" stroke-width="0.9"/><rect x="1680" y="77" width="11.7" height="11.7" fill="#ececec"/><path d="M1682 80H1683.3M1685 80H1690M1682 83H1683.3M1685 83H1690M1682 86H1683.3M1685 86H1690" stroke="#3f8fdc" stroke-width="1.2"/><path d="M1681 69.2L1677 75H1680L1678.5 79.5L1684.5 73H1681L1683.5 69.2Z" fill="#f5c85c"/><path d="M1671.7 75.0L1671.7 86.0L1674.3 83.6L1676.3 88.0L1678.1 87.2L1676.2 82.9L1679.7 82.9Z" fill="#f4f4f4" stroke="#3b4453" stroke-width="0.5"/><rect x="1672.2" y="100.2" width="17.6" height="17.6" fill="none" stroke="#4fc071" stroke-width="1.1" stroke-dasharray="2 1.2"/><rect x="1678.5" y="102.5" width="9.5" height="9.5" fill="#3d9a5c"/><rect x="1674" y="106.5" width="9.5" height="9.5" fill="#62c985"/><path d="M1683.7 108.5L1683.7 119.0L1686.2 116.7L1688.1 120.8L1689.8 120.1L1688.0 116.0L1691.3 116.0Z" fill="#f4f4f4" stroke="#3b4453" stroke-width="0.5"/><rect x="1673.7" y="130.8" width="15" height="20" fill="#d9d9d9"/><rect x="1675.7" y="132.8" width="11" height="4" fill="#7a7a7a"/><rect x="1675.8" y="139.3" width="2.6" height="2.4" fill="#7a7a7a"/><rect x="1680" y="139.3" width="2.6" height="2.4" fill="#7a7a7a"/><rect x="1684.2" y="139.3" width="2.6" height="2.4" fill="#7a7a7a"/><rect x="1675.8" y="143.1" width="2.6" height="2.4" fill="#7a7a7a"/><rect x="1680" y="143.1" width="2.6" height="2.4" fill="#7a7a7a"/><rect x="1684.2" y="143.1" width="2.6" height="2.4" fill="#7a7a7a"/><rect x="1675.8" y="146.9" width="2.6" height="2.4" fill="#7a7a7a"/><rect x="1680" y="146.9" width="2.6" height="2.4" fill="#7a7a7a"/><rect x="1684.2" y="146.9" width="2.6" height="2.4" fill="#7a7a7a"/><rect x="1718.7" y="72" width="27.6" height="31" rx="1" fill="#d9a862"/><path d="M1725.8 73.3V70.5H1729.5Q1732.5 66 1735.5 70.5H1739.2V73.3Z" fill="#f2f2f2"/><path d="M1727.5 79.7H1744.5L1750.8 86V108H1727.5Z" fill="#dcdcdc"/><path d="M1744.5 79.7V86H1750.8Z" fill="#f8f8f8"/><rect x="1770.8" y="69.2" width="15" height="16.5" fill="#d2d2d2"/><path d="M1773 73H1783.5M1773 76H1783.5M1773 79H1780M1773 82H1779" stroke="#9a9a9a" stroke-width="1"/><path d="M1779.5 75L1788 84.5M1790 76L1783 84.5" stroke="#f4f4f4" stroke-width="1.7"/><circle cx="1782" cy="86.3" r="2" fill="none" stroke="#f4f4f4" stroke-width="1.2"/><circle cx="1788.8" cy="86.3" r="2" fill="none" stroke="#f4f4f4" stroke-width="1.2"/><path d="M1772.5 100H1779.5L1783 103.5V113.5H1772.5Z" fill="#c4c4c4" stroke="#3b4453" stroke-width="0.7"/><path d="M1777.3 104.5H1785.2L1788.7 108V119.7H1777.3Z" fill="#d6d6d6" stroke="#3b4453" stroke-width="0.7"/><path d="M1834.8 72H1852.5V85H1875V101.7H1834.8Z" fill="#dcdcdc"/></svg>
<svg class="r" style="left:0px;top:0px;" width="300" height="220" viewBox="0 0 300 220"><path d="M11.3 210L19.7 191.8M242 210L249.7 191.5" stroke="#596172" stroke-width="1.3"/><path d="M177.5 196.5L186.5 205.5M186.5 196.5L177.5 205.5" stroke="#b4b4b4" stroke-width="2"/><path d="M221 194V208.5M213.5 201.2H228.5" stroke="#f0f0f0" stroke-width="2.2"/></svg>
<span class="t" style="left:30.30px;top:194.10px;font-size:15px;line-height:15px;color:#e2e2e2;letter-spacing:-0.235px;">Start</span>
<span class="t" style="left:91.30px;top:194.10px;font-size:15px;line-height:15px;color:#f4f4f4;letter-spacing:0.094px;font-weight:700;">Drawing1*</span>
<div class="r" style="left:8.5px;top:232px;width:1px;height:1px;background:#aab0bb;"></div>
<div class="r" style="left:10.5px;top:232px;width:1px;height:1px;background:#aab0bb;"></div>
<div class="r" style="left:8.5px;top:234px;width:1px;height:1px;background:#aab0bb;"></div>
<div class="r" style="left:10.5px;top:234px;width:1px;height:1px;background:#aab0bb;"></div>
<div class="r" style="left:8.5px;top:236px;width:1px;height:1px;background:#aab0bb;"></div>
<div class="r" style="left:10.5px;top:236px;width:1px;height:1px;background:#aab0bb;"></div>
<div class="r" style="left:8.5px;top:238px;width:1px;height:1px;background:#aab0bb;"></div>
<div class="r" style="left:10.5px;top:238px;width:1px;height:1px;background:#aab0bb;"></div>
<div class="r" style="left:8.5px;top:240px;width:1px;height:1px;background:#aab0bb;"></div>
<div class="r" style="left:10.5px;top:240px;width:1px;height:1px;background:#aab0bb;"></div>
<span class="t" style="left:18.30px;top:229.95px;font-size:14px;line-height:14px;color:#eaeaea;letter-spacing:-0.593px;">LAYER PROPERTIES MANAGER</span>
<div class="r" style="left:0px;top:252.5px;width:468px;height:811px;background:#3b4453;border-radius:6px 0 5px 5px;"></div>
<div class="r" style="left:0px;top:1063.5px;width:473px;height:6.5px;background:#3b4453;"></div>
<span class="t" style="left:5.50px;top:265.80px;font-size:15px;line-height:15px;color:#e2e2e2;letter-spacing:-0.323px;">Current layer: 0</span>
<div class="r" style="left:311.8px;top:259.2px;width:156px;height:19.6px;background:#525e75;"></div>
<span class="t" style="left:312.60px;top:262.60px;font-size:15px;line-height:15px;color:#c9ced6;letter-spacing:-0.199px;">Search for layer</span>
<svg class="r" style="left:449px;top:261px;" width="18" height="18" viewBox="0 0 18 18"><circle cx="7.5" cy="7" r="5.3" fill="#5f6b82" stroke="#ececec" stroke-width="1.4"/><path d="M11.3 11L16 15.7" stroke="#e0a84a" stroke-width="2"/></svg>
<svg class="r" style="left:0px;top:0px;" width="480" height="320" viewBox="0 0 480 320"><path d="M1.9 291H8.55L10.3 293.312H19.4V304.6H1.9Z" fill="#cfcfcf"/><path d="M11.5 301H22.5L18.3 305.5V310.8L15.7 309.5V305.5Z" fill="#c2c2c2" stroke="#3b4453" stroke-width="0.8"/><path d="M29.6 292.8H36.326L38.096 295.299H47.3V307.5H29.6Z" fill="#cfcfcf"/><rect x="55.3" y="289.6" width="1.8" height="22.4" fill="#2a313d"/><path d="M64.4 303.0L69.4 298.0H78.4L73.4 303.0Z" fill="#a0a4aa"/><path d="M64.4 298.0L70.9 292.0H80.9L74.4 298.0Z" fill="#d6d6d6"/><rect x="73.8" y="298" width="10.2" height="12.2" fill="#ececec"/><rect x="75.3" y="299.5" width="7.2" height="4.3" fill="#5ab0ee"/><path d="M76 307H82" stroke="#666" stroke-width="1"/><path d="M126.3 306.4L132.3 300.0H144.1L138.1 306.4Z" fill="#d6d6d6" stroke="#3b4453" stroke-width="0.8"/><path d="M126.3 302.0L132.3 295.6H144.1L138.1 302.0Z" fill="#d6d6d6" stroke="#3b4453" stroke-width="0.8"/><path d="M126.3 297.6L132.3 291.2H144.1L138.1 297.6Z" fill="#d6d6d6" stroke="#3b4453" stroke-width="0.8"/><path d="M140.3 300.3L141.2 303.7L144.3 301.9L142.5 305.0L145.9 305.9L142.5 306.8L144.3 309.9L141.2 308.1L140.3 311.5L139.4 308.1L136.3 309.9L138.1 306.8L134.7 305.9L138.1 305.0L136.3 301.9L139.4 303.7Z" fill="#f5c85c"/><path d="M153.1 306.4L159.1 300.0H170.9L164.9 306.4Z" fill="#d6d6d6" stroke="#3b4453" stroke-width="0.8"/><path d="M153.1 302.0L159.1 295.6H170.9L164.9 302.0Z" fill="#d6d6d6" stroke="#3b4453" stroke-width="0.8"/><path d="M153.1 297.6L159.1 291.2H170.9L164.9 297.6Z" fill="#d6d6d6" stroke="#3b4453" stroke-width="0.8"/><path d="M172.0 308.8L164.0 304.2" stroke="#5fd0d8" stroke-width="1.1"/><path d="M168.0 311.1L168.0 301.9" stroke="#5fd0d8" stroke-width="1.1"/><path d="M164.0 308.8L172.0 304.2" stroke="#5fd0d8" stroke-width="1.1"/><circle cx="168" cy="306.5" r="2.8" fill="none" stroke="#5fd0d8" stroke-width="0.9"/><path d="M180.0 306.4L186.0 300.0H197.8L191.8 306.4Z" fill="#d6d6d6" stroke="#3b4453" stroke-width="0.8"/><path d="M180.0 302.0L186.0 295.6H197.8L191.8 302.0Z" fill="#d6d6d6" stroke="#3b4453" stroke-width="0.8"/><path d="M180.0 297.6L186.0 291.2H197.8L191.8 297.6Z" fill="#d6d6d6" stroke="#3b4453" stroke-width="0.8"/><path d="M192.5 304L198.7 310.2M198.7 304L192.5 310.2" stroke="#ea4f5c" stroke-width="1.8"/><path d="M207.3 306.4L213.3 300.0H225.1L219.1 306.4Z" fill="#d6d6d6" stroke="#3b4453" stroke-width="0.8"/><path d="M207.3 302.0L213.3 295.6H225.1L219.1 302.0Z" fill="#d6d6d6" stroke="#3b4453" stroke-width="0.8"/><path d="M207.3 297.6L213.3 291.2H225.1L219.1 297.6Z" fill="#d6d6d6" stroke="#3b4453" stroke-width="0.8"/><path d="M217 305.5L220 308.8L225.8 302.5" fill="none" stroke="#3fc470" stroke-width="1.8"/><path d="M381 299A8 8 0 0 1 395 294.5" fill="none" stroke="#3fc470" stroke-width="2.6"/><path d="M398.5 291.5V298.8H391.2Z" fill="#3fc470"/><path d="M397 302A8 8 0 0 1 383 306.5" fill="none" stroke="#3fc470" stroke-width="2.6"/><path d="M379.5 309.5V302.2H386.8Z" fill="#3fc470"/><path d="M408.0 308.0L414.0 302.0H425.0L419.0 308.0Z" fill="#8d929b"/><rect x="407" y="292.5" width="10.5" height="10.5" fill="#cfcfcf"/><path d="M447.56 300.50L453.30 300.50" stroke="#dedede" stroke-width="4.3"/><path d="M446.22 303.72L450.28 307.78" stroke="#dedede" stroke-width="4.3"/><path d="M443.00 305.06L443.00 310.80" stroke="#dedede" stroke-width="4.3"/><path d="M439.78 303.72L435.72 307.78" stroke="#dedede" stroke-width="4.3"/><path d="M438.44 300.50L432.70 300.50" stroke="#dedede" stroke-width="4.3"/><path d="M439.78 297.28L435.72 293.22" stroke="#dedede" stroke-width="4.3"/><path d="M443.00 295.94L443.00 290.20" stroke="#dedede" stroke-width="4.3"/><path d="M446.22 297.28L450.28 293.22" stroke="#dedede" stroke-width="4.3"/><circle cx="443" cy="300.5" r="5.45" fill="none" stroke="#dedede" stroke-width="4.3"/></svg>
<div class="r" style="left:0px;top:315px;width:118px;height:29px;background:#3b4453;border:1px solid #2a313d;border-left:none;box-sizing:border-box;"></div>
<span class="t" style="left:6.50px;top:321.10px;font-size:15px;line-height:15px;color:#e2e2e2;letter-spacing:-0.290px;">Filters</span>
<svg class="r" style="left:96px;top:324px;" width="16" height="11" viewBox="0 0 16 11"><path d="M6.8 0.8L2 5.5L6.8 10.2M14 0.8L9.2 5.5L14 10.2" fill="none" stroke="#d4d4d4" stroke-width="2.5"/></svg>
<div class="r" style="left:123px;top:315px;width:129px;height:29px;background:#434c5f;"></div>
<div class="r" style="left:255px;top:315px;width:212px;height:29px;background:#434c5f;"></div>
<div class="r" style="left:144.8px;top:315px;width:1.3px;height:29px;background:#2a313d;"></div>
<div class="r" style="left:276.8px;top:315px;width:1.3px;height:29px;background:#2a313d;"></div>
<div class="r" style="left:299.8px;top:315px;width:1.3px;height:29px;background:#2a313d;"></div>
<div class="r" style="left:322.4px;top:315px;width:1.3px;height:29px;background:#2a313d;"></div>
<div class="r" style="left:382.8px;top:315px;width:1.3px;height:29px;background:#2a313d;"></div>
<div class="r" style="left:462.7px;top:315px;width:1.3px;height:29px;background:#2a313d;"></div>
<span class="t" style="left:128.50px;top:321.70px;font-size:15px;line-height:15px;color:#e2e2e2;letter-spacing:-1.802px;">S...</span>
<span class="t" style="left:151.60px;top:321.70px;font-size:15px;line-height:15px;color:#e2e2e2;letter-spacing:-0.253px;">Name</span>
<span class="t" style="left:260.30px;top:321.70px;font-size:15px;line-height:15px;color:#e2e2e2;letter-spacing:-1.325px;">F...</span>
<span class="t" style="left:283.30px;top:321.70px;font-size:15px;line-height:15px;color:#e2e2e2;letter-spacing:-1.661px;">L...</span>
<span class="t" style="left:306.50px;top:321.70px;font-size:15px;line-height:15px;color:#e2e2e2;letter-spacing:-1.393px;">P...</span>
<span class="t" style="left:329.00px;top:321.70px;font-size:15px;line-height:15px;color:#e2e2e2;letter-spacing:0.011px;">Color</span>
<span class="t" style="left:389.30px;top:321.70px;font-size:15px;line-height:15px;color:#e2e2e2;letter-spacing:-0.189px;">Linetype</span>
<svg class="r" style="left:241.7px;top:328px;" width="8" height="4" viewBox="0 0 8 4"><path d="M0 4H8L4 0Z" fill="#d8d8d8"/></svg>
<div class="r" style="left:117px;top:344px;width:1.3px;height:621px;background:#2a313d;"></div>
<div class="r" style="left:252.3px;top:344px;width:2px;height:650px;background:#2a313d;"></div>
<div class="r" style="left:123px;top:344px;width:129px;height:23px;background:#7388aa;"></div>
<div class="r" style="left:255px;top:344px;width:212px;height:23px;background:#7388aa;"></div>
<svg class="r" style="left:126.5px;top:349px;" width="15" height="11" viewBox="0 0 15 11"><path d="M1 5.5L5 9.5L13.5 1.2" fill="none" stroke="#3fc470" stroke-width="2.6"/></svg>
<span class="t" style="left:150.40px;top:347.30px;font-size:15px;line-height:15px;color:#f0f0f0;">0</span>
<svg class="r" style="left:0px;top:0px;" width="480" height="380" viewBox="0 0 480 380"><circle cx="265.3" cy="355.5" r="4.6" fill="#f5c85c"/><path d="M271.2 355.5L273.1 355.5" stroke="#f5c85c" stroke-width="1.3"/><path d="M269.5 359.7L270.8 361.0" stroke="#f5c85c" stroke-width="1.3"/><path d="M265.3 361.4L265.3 363.3" stroke="#f5c85c" stroke-width="1.3"/><path d="M261.1 359.7L259.8 361.0" stroke="#f5c85c" stroke-width="1.3"/><path d="M259.4 355.5L257.5 355.5" stroke="#f5c85c" stroke-width="1.3"/><path d="M261.1 351.3L259.8 350.0" stroke="#f5c85c" stroke-width="1.3"/><path d="M265.3 349.6L265.3 347.7" stroke="#f5c85c" stroke-width="1.3"/><path d="M269.5 351.3L270.8 350.0" stroke="#f5c85c" stroke-width="1.3"/><path d="M286.775 355.5V353.175A2.94 3.15 0 0 1 292.76 353.175V354.803" fill="none" stroke="#f5c85c" stroke-width="1.6"/><rect x="281" y="355.5" width="10.5" height="7.5" fill="#f5c85c"/><rect x="285.6" y="357.75" width="1.3" height="3" fill="#7388aa"/><rect x="306.5" y="348.5" width="10.5" height="4.5" fill="#f4f4f4"/><rect x="303.7" y="352" width="16.2" height="7" rx="0.8" fill="#e4e4e4"/><rect x="306.5" y="356.5" width="10.5" height="6" fill="#f4f4f4"/><rect x="307.7" y="358" width="8.1" height="3.3" fill="#4ba6ec"/><rect x="327.3" y="348.6" width="14.3" height="14" fill="#ffffff" stroke="#bfc5cf" stroke-width="0.8"/></svg>
<span class="t" style="left:346.00px;top:347.30px;font-size:15px;line-height:15px;color:#f0f0f0;letter-spacing:-0.235px;">wh...</span>
<span class="t" style="left:387.20px;top:347.30px;font-size:15px;line-height:15px;color:#f0f0f0;letter-spacing:-0.000px;">Continu...</span>
<div class="r" style="left:464.5px;top:355.5px;width:2.5px;height:1.2px;background:#e8e8e8;"></div>
<svg class="r" style="left:0px;top:0px;" width="120" height="400" viewBox="0 0 120 400"><rect x="8.5" y="356.3" width="10" height="10" rx="1" fill="#f2f2f2" stroke="#8a8f99" stroke-width="1"/><path d="M10.7 361.3H16.3" stroke="#2d4d9a" stroke-width="1.4"/><path d="M20 361.3H27.5M37.5 369V383.5H52" stroke="#c0c4cc" stroke-width="1" stroke-dasharray="1 1.2" fill="none"/><path d="M30.0 365.2L34.5 360.6H43.0L38.5 365.2Z" fill="#d6d6d6" stroke="#3b4453" stroke-width="0.8"/><path d="M30.0 361.4L34.5 356.8H43.0L38.5 361.4Z" fill="#d6d6d6" stroke="#3b4453" stroke-width="0.8"/><path d="M30.0 357.6L34.5 353.0H43.0L38.5 357.6Z" fill="#d6d6d6" stroke="#3b4453" stroke-width="0.8"/><path d="M37.5 363.5L40 366.3L44.3 361.3" fill="none" stroke="#3fc470" stroke-width="1.7"/><path d="M53 375.5H57.94L59.24 377.285H66V386H53Z" fill="#cfcfcf"/><path d="M59 382H68L64.8 385.5V389L62.6 388V385.5Z" fill="#c2c2c2" stroke="#3b4453" stroke-width="0.7"/></svg>
<div class="r" style="left:50px;top:349px;width:22px;height:22px;background:#6d82a4;"></div>
<span class="t" style="left:51.90px;top:352.80px;font-size:15px;line-height:15px;color:#f4f4f4;letter-spacing:-0.023px;">All</span>
<div class="r" style="left:75.2px;top:374px;width:41.6px;height:18px;overflow:hidden">
<span class="t" style="left:0.00px;top:1.30px;font-size:15px;line-height:15px;color:#e2e2e2;">All Used Layers</span>
</div>
<div class="r" style="left:0px;top:965px;width:117px;height:21px;background:#f0f0f0;"></div>
<div class="r" style="left:20.7px;top:974.3px;width:49.3px;height:2.4px;background:#8a8a8a;border-radius:1px;"></div>
<div class="r" style="left:122.7px;top:994px;width:344px;height:21px;background:#f0f0f0;"></div>
<div class="r" style="left:144px;top:1002.7px;width:96.7px;height:2.6px;background:#8a8a8a;border-radius:1px;"></div>
<div class="r" style="left:0px;top:986px;width:118px;height:1.2px;background:#2a313d;"></div>
<div class="r" style="left:0px;top:1013.5px;width:118px;height:1.2px;background:#2a313d;"></div>
<div class="r" style="left:117px;top:986px;width:1.3px;height:28px;background:#2a313d;"></div>
<div class="r" style="left:5.7px;top:993.3px;width:14.3px;height:14px;background:#ffffff;border:1px solid #8a8f99;border-radius:3px;box-sizing:border-box;"></div>
<span class="t" style="left:25.70px;top:992.30px;font-size:15px;line-height:15px;color:#e2e2e2;letter-spacing:0.279px;">Invert fil</span>
<svg class="r" style="left:96.5px;top:996px;" width="15" height="11" viewBox="0 0 15 11"><path d="M6.3 0.8L1.8 5.3L6.3 9.8M13.3 0.8L8.8 5.3L13.3 9.8" fill="none" stroke="#d4d4d4" stroke-width="2.4"/></svg>
<span class="t" style="left:4.00px;top:1038.00px;font-size:15px;line-height:15px;color:#e2e2e2;letter-spacing:-0.023px;">All: 1 layers displayed of 1 total layers</span>
<span class="t" style="left:30.70px;top:1079.00px;font-size:15px;line-height:15px;color:#f4f4f4;letter-spacing:-0.006px;font-weight:700;">Model</span>
<span class="t" style="left:104.00px;top:1079.00px;font-size:15px;line-height:15px;color:#e2e2e2;letter-spacing:-0.692px;">a3</span>
<svg class="r" style="left:0px;top:1070px;" width="200" height="37" viewBox="0 0 200 37"><path d="M131.7 25L139.3 7M181 25L188.3 7" stroke="#596172" stroke-width="1.3"/><path d="M159.5 8.3V23.3M152.3 15.8H166.7" stroke="#f0f0f0" stroke-width="2.2"/></svg>
<div class="r" style="left:-2px;top:519px;width:300px;height:399.5px;background:#3b4453;border:2px solid #262c38;border-radius:7px;box-sizing:border-box;"></div>
<div class="r" style="left:29.5px;top:523px;width:265.5px;height:392.5px;background:#3b4453;border:1.6px solid #262c38;border-radius:6px;box-sizing:border-box;"></div>
<svg class="r" style="left:0px;top:0px;" width="300" height="930" viewBox="0 0 300 930"><path d="M11.3 528.3L20.5 537.3M20.5 528.3L11.3 537.3" stroke="#dadada" stroke-width="2.6"/><rect x="10.6" y="551" width="1.8" height="12" fill="#d4d4d4"/><path d="M13 557L21 551.3V562.7Z" fill="#d4d4d4"/><path d="M19.16 581.80L23.30 581.80" stroke="#d8d8d8" stroke-width="2.9"/><path d="M18.35 583.75L21.28 586.68" stroke="#d8d8d8" stroke-width="2.9"/><path d="M16.40 584.56L16.40 588.70" stroke="#d8d8d8" stroke-width="2.9"/><path d="M14.45 583.75L11.52 586.68" stroke="#d8d8d8" stroke-width="2.9"/><path d="M13.64 581.80L9.50 581.80" stroke="#d8d8d8" stroke-width="2.9"/><path d="M14.45 579.85L11.52 576.92" stroke="#d8d8d8" stroke-width="2.9"/><path d="M16.40 579.04L16.40 574.90" stroke="#d8d8d8" stroke-width="2.9"/><path d="M18.35 579.85L21.28 576.92" stroke="#d8d8d8" stroke-width="2.9"/><circle cx="16.4" cy="581.8" r="3.1" fill="none" stroke="#d8d8d8" stroke-width="3"/><rect x="8.2" y="896" width="15.5" height="19" fill="#d4d4d4"/><rect x="9.8" y="897.6" width="12.3" height="8.4" fill="#62b6f3"/><path d="M10.5 909H21.5M10.5 912H21.5" stroke="#777" stroke-width="0.9"/></svg>
<span class="t" style="left:8.6px;top:883px;font-size:13.5px;line-height:14px;color:#d8d8d8;letter-spacing:-0.7px;transform-origin:0 0;transform:rotate(-90deg);">PROPERTIES</span>
<div class="r" style="left:55.5px;top:540.5px;width:134.2px;height:27.8px;background:#4f5b71;border:1px solid #2c3340;box-sizing:border-box;border-radius:1px;"></div>
<span class="t" style="left:59.40px;top:547.00px;font-size:15px;line-height:15px;color:#e6e6e6;letter-spacing:0.038px;">No selection</span>
<svg class="r" style="left:175.7px;top:553px;" width="8.6" height="4.6" viewBox="0 0 8.6 4.6"><path d="M0 0H8.6L4.3 4.6Z" fill="#d0d0d0"/></svg>
<svg class="r" style="left:0px;top:0px;" width="300" height="600" viewBox="0 0 300 600"><rect x="200.2" y="547.7" width="10.2" height="10.4" fill="#5ab0ee"/><rect x="206.8" y="554.2" width="10.6" height="10.7" fill="#7cc4f8" stroke="#3b4453" stroke-width="0.7"/><path d="M215.9 545V554M211.4 549.5H220.4" stroke="#4fc071" stroke-width="2.2"/><rect x="229.7" y="545.8" width="14.6" height="11.2" fill="#5fbf80" stroke="#3a9a5c" stroke-width="1" stroke-dasharray="2 1.2"/><path d="M240.3 553.8L240.3 564.2L242.8 562.0L244.7 566.1L246.4 565.4L244.6 561.3L247.9 561.3Z" fill="#f4f4f4" stroke="#3b4453" stroke-width="0.5"/><rect x="266" y="553.5" width="12.1" height="11.4" fill="#ececec"/><path d="M268 556.5H269.2M270.8 556.5H276M268 559.3H269.2M270.8 559.3H276M268 562H269.2M270.8 562H276" stroke="#3f8fdc" stroke-width="1.1"/><path d="M265.5 545.3L261 550.5H264L262 554L269 548.5H265.8L268.5 545.3Z" fill="#f5c85c"/><path d="M258.0 551.0L258.0 562.0L260.6 559.6L262.6 564.0L264.4 563.2L262.5 558.9L266.0 558.9Z" fill="#f4f4f4" stroke="#3b4453" stroke-width="0.5"/></svg>
<div class="r" style="left:38px;top:574.6px;width:5.4px;height:148.5px;background:#2a313d;border-radius:3px;"></div>
<div class="r" style="left:54px;top:574.4px;width:223px;height:26.3px;background:#2b3140;"></div>
<span class="t" style="left:63.00px;top:580.10px;font-size:15px;line-height:15px;color:#f4f4f4;letter-spacing:-0.266px;font-weight:700;">General</span>
<svg class="r" style="left:257.3px;top:584.4px;" width="10" height="4.8" viewBox="0 0 10 4.8"><path d="M0 0H10L5 4.8Z" fill="#d8d8d8"/></svg>
<div class="r" style="left:75.4px;top:600px;width:201.5px;height:27px;background:#3b4453;border:1px solid #2a313d;box-sizing:border-box;"></div>
<div class="r" style="left:161.8px;top:601px;width:1px;height:25px;background:#2a313d;"></div>
<span class="t" style="left:85.30px;top:606.30px;font-size:15px;line-height:15px;color:#c6cad1;letter-spacing:0.031px;">Color</span>
<div class="r" style="left:166px;top:604.5px;width:18px;height:18px;background:#ffffff;border:1px solid #c8c8c8;box-sizing:border-box;"></div>
<span class="t" style="left:191.60px;top:606.30px;font-size:15px;line-height:15px;color:#e6e6e6;letter-spacing:-0.647px;">ByLayer</span>
<div class="r" style="left:75.4px;top:626px;width:201.5px;height:27px;background:#3b4453;border:1px solid #2a313d;box-sizing:border-box;"></div>
<div class="r" style="left:161.8px;top:627px;width:1px;height:25px;background:#2a313d;"></div>
<span class="t" style="left:85.30px;top:632.30px;font-size:15px;line-height:15px;color:#c6cad1;letter-spacing:-0.544px;">Layer</span>
<span class="t" style="left:166.30px;top:632.30px;font-size:15px;line-height:15px;color:#e6e6e6;">0</span>
<div class="r" style="left:75.4px;top:652px;width:201.5px;height:27px;background:#3b4453;border:1px solid #2a313d;box-sizing:border-box;"></div>
<div class="r" style="left:161.8px;top:653px;width:1px;height:25px;background:#2a313d;"></div>
<span class="t" style="left:85.30px;top:658.30px;font-size:15px;line-height:15px;color:#c6cad1;letter-spacing:0.036px;">Linetype</span>
<div class="r" style="left:167px;top:665.2px;width:50px;height:1.3px;background:#e0e0e0;"></div>
<span class="t" style="left:222.60px;top:658.30px;font-size:15px;line-height:15px;color:#e6e6e6;letter-spacing:-0.535px;">ByLay...</span>
<div class="r" style="left:75.4px;top:678px;width:201.5px;height:27px;background:#3b4453;border:1px solid #2a313d;box-sizing:border-box;"></div>
<div class="r" style="left:161.8px;top:679px;width:1px;height:25px;background:#2a313d;"></div>
<span class="t" style="left:85.30px;top:684.30px;font-size:15px;line-height:15px;color:#c6cad1;letter-spacing:-0.110px;">Linetype...</span>
<span class="t" style="left:166.30px;top:684.30px;font-size:15px;line-height:15px;color:#e6e6e6;letter-spacing:-0.647px;">1.000</span>
<div class="r" style="left:75.4px;top:704px;width:201.5px;height:27px;background:#3b4453;border:1px solid #2a313d;box-sizing:border-box;"></div>
<div class="r" style="left:161.8px;top:705px;width:1px;height:25px;background:#2a313d;"></div>
<span class="t" style="left:85.30px;top:710.30px;font-size:15px;line-height:15px;color:#c6cad1;letter-spacing:0.228px;">Lineweight</span>
<div class="r" style="left:167px;top:717.2px;width:50px;height:1.3px;background:#e0e0e0;"></div>
<span class="t" style="left:222.60px;top:710.30px;font-size:15px;line-height:15px;color:#e6e6e6;letter-spacing:-0.535px;">ByLay...</span>
<div class="r" style="left:75.4px;top:730px;width:201.5px;height:27px;background:#3b4453;border:1px solid #2a313d;box-sizing:border-box;"></div>
<div class="r" style="left:161.8px;top:731px;width:1px;height:25px;background:#2a313d;"></div>
<span class="t" style="left:85.30px;top:736.30px;font-size:15px;line-height:15px;color:#c6cad1;letter-spacing:-0.285px;">Transpar...</span>
<span class="t" style="left:166.30px;top:736.30px;font-size:15px;line-height:15px;color:#e6e6e6;letter-spacing:-0.647px;">ByLayer</span>
<div class="r" style="left:75.4px;top:756px;width:201.5px;height:27px;background:#3b4453;border:1px solid #2a313d;box-sizing:border-box;"></div>
<div class="r" style="left:161.8px;top:757px;width:1px;height:25px;background:#2a313d;"></div>
<span class="t" style="left:85.30px;top:762.30px;font-size:15px;line-height:15px;color:#c6cad1;letter-spacing:-0.391px;">Thickness</span>
<span class="t" style="left:166.30px;top:762.30px;font-size:15px;line-height:15px;color:#e6e6e6;letter-spacing:-0.647px;">0.000</span>
<div class="r" style="left:54px;top:787.5px;width:223px;height:26.3px;background:#2b3140;"></div>
<span class="t" style="left:63.00px;top:793.20px;font-size:15px;line-height:15px;color:#f4f4f4;letter-spacing:-0.141px;font-weight:700;">3D Visualization</span>
<svg class="r" style="left:257.3px;top:797.5px;" width="10" height="4.8" viewBox="0 0 10 4.8"><path d="M0 0H10L5 4.8Z" fill="#d8d8d8"/></svg>
<div class="r" style="left:75.4px;top:813px;width:201.5px;height:27px;background:#3b4453;border:1px solid #2a313d;box-sizing:border-box;"></div>
<div class="r" style="left:161.8px;top:814px;width:1px;height:25px;background:#2a313d;"></div>
<span class="t" style="left:85.30px;top:819.30px;font-size:15px;line-height:15px;color:#c6cad1;letter-spacing:0.269px;">Material</span>
<span class="t" style="left:166.30px;top:819.30px;font-size:15px;line-height:15px;color:#e6e6e6;letter-spacing:-0.647px;">ByLayer</span>
<div class="r" style="left:54px;top:844.6px;width:223px;height:26.3px;background:#2b3140;"></div>
<span class="t" style="left:63.00px;top:850.30px;font-size:15px;line-height:15px;color:#f4f4f4;letter-spacing:-0.169px;font-weight:700;">Plot style</span>
<svg class="r" style="left:257.3px;top:854.6px;" width="10" height="4.8" viewBox="0 0 10 4.8"><path d="M0 0H10L5 4.8Z" fill="#d8d8d8"/></svg>
<div class="r" style="left:75.4px;top:869.6px;width:201.5px;height:27px;background:#3b4453;border:1px solid #2a313d;box-sizing:border-box;"></div>
<div class="r" style="left:161.8px;top:870.6px;width:1px;height:25px;background:#2a313d;"></div>
<span class="t" style="left:85.30px;top:875.90px;font-size:15px;line-height:15px;color:#c6cad1;letter-spacing:-0.136px;">Plot style</span>
<span class="t" style="left:166.30px;top:875.90px;font-size:15px;line-height:15px;color:#9aa1ad;letter-spacing:-0.193px;">ByColor</span>
<div class="r" style="left:75.4px;top:895.6px;width:201.5px;height:16px;background:#3b4453;border:1px solid #2a313d;box-sizing:border-box;border-bottom:none;"></div>
<div class="r" style="left:161.8px;top:896.6px;width:1px;height:14px;background:#2a313d;"></div>
<div class="r" style="left:76px;top:896.6px;width:200px;height:14px;overflow:hidden">
<span class="t" style="left:9.30px;top:5.30px;font-size:15px;line-height:15px;color:#c6cad1;letter-spacing:-0.136px;">Plot style</span>
<span class="t" style="left:90.30px;top:5.30px;font-size:15px;line-height:15px;color:#e6e6e6;letter-spacing:0.035px;">None</span>
</div>
<svg class="r" style="left:489px;top:238px;" width="18" height="20" viewBox="0 0 18 20"><path d="M0 0H12.5L18 5.5V20H0Z" fill="#2f6cb0"/><path d="M12.5 0V5.5H18Z" fill="#9bbde0"/><path d="M0 11.5L8.5 11.5L18 16.5V20H0Z" fill="#f0b323"/><path d="M5.3 0V11M0 6.5H11" stroke="#cfe0f2" stroke-width="1.4"/><circle cx="5.3" cy="6.5" r="1.9" fill="#2f6cb0" stroke="#e8f0fa" stroke-width="1"/></svg>
<span class="t" style="left:512.50px;top:241.00px;font-size:15px;line-height:15px;color:#101010;letter-spacing:-0.046px;">Drawing1.dwg</span>
<span class="t" style="left:490.00px;top:271.30px;font-size:15px;line-height:15px;color:#f0f0f0;letter-spacing:0.835px;">[−]</span>
<span class="t" style="left:512.10px;top:271.30px;font-size:15px;line-height:15px;color:#f0f0f0;letter-spacing:-0.224px;">[Top]</span>
<span class="t" style="left:546.20px;top:271.30px;font-size:15px;line-height:15px;color:#f0f0f0;letter-spacing:-0.132px;">[2D Wireframe]</span>
<svg class="r" style="left:486px;top:263px;overflow:hidden" width="1432" height="800.8" viewBox="486 263 1432 800.8"><rect x="664" y="375.3" width="624.7" height="19.3" fill="none" stroke="#ffffff" stroke-width="1.3"/><path d="M664.60 390.60L667.77 376.70L671.51 393.20L675.25 376.70L678.99 393.20L682.73 376.70L686.47 393.20L690.21 376.70L693.95 393.20L697.69 376.70L701.43 393.20L705.17 376.70L708.91 393.20L712.65 376.70L716.39 393.20L720.13 376.70L723.87 393.20L727.61 376.70L731.35 393.20L735.09 376.70L738.83 393.20L742.57 376.70L746.31 393.20L750.05 376.70L753.79 393.20L757.53 376.70L761.27 393.20L765.01 376.70L768.75 393.20L772.49 376.70L776.23 393.20L779.97 376.70L783.71 393.20L787.45 376.70L791.19 393.20L794.93 376.70L798.67 393.20L802.41 376.70L806.15 393.20L809.89 376.70L813.63 393.20L817.37 376.70L821.11 393.20L824.85 376.70L828.59 393.20L832.33 376.70L836.07 393.20L839.81 376.70L843.55 393.20L847.29 376.70L851.03 393.20L854.77 376.70L858.51 393.20L862.25 376.70L865.99 393.20L869.73 376.70L873.47 393.20L877.21 376.70L880.95 393.20L884.69 376.70L888.43 393.20L892.17 376.70L895.91 393.20L899.65 376.70L903.39 393.20L907.13 376.70L910.87 393.20L914.61 376.70L918.35 393.20L922.09 376.70L925.83 393.20L929.57 376.70L933.31 393.20L937.05 376.70L940.79 393.20L944.53 376.70L948.27 393.20L952.01 376.70L955.75 393.20L959.49 376.70L963.23 393.20L966.97 376.70L970.71 393.20L974.45 376.70L978.19 393.20L981.93 376.70L985.67 393.20L989.41 376.70L993.15 393.20L996.89 376.70L1000.63 393.20L1004.37 376.70L1008.11 393.20L1011.85 376.70L1015.59 393.20L1019.33 376.70L1023.07 393.20L1026.81 376.70L1030.55 393.20L1034.29 376.70L1038.03 393.20L1041.77 376.70L1045.51 393.20L1049.25 376.70L1052.99 393.20L1056.73 376.70L1060.47 393.20L1064.21 376.70L1067.95 393.20L1071.69 376.70L1075.43 393.20L1079.17 376.70L1082.91 393.20L1086.65 376.70L1090.39 393.20L1094.13 376.70L1097.87 393.20L1101.61 376.70L1105.35 393.20L1109.09 376.70L1112.83 393.20L1116.57 376.70L1120.31 393.20L1124.05 376.70L1127.79 393.20L1131.53 376.70L1135.27 393.20L1139.01 376.70L1142.75 393.20L1146.49 376.70L1150.23 393.20L1153.97 376.70L1157.71 393.20L1161.45 376.70L1165.19 393.20L1168.93 376.70L1172.67 393.20L1176.41 376.70L1180.15 393.20L1183.89 376.70L1187.63 393.20L1191.37 376.70L1195.11 393.20L1198.85 376.70L1202.59 393.20L1206.33 376.70L1210.07 393.20L1213.81 376.70L1217.55 393.20L1221.29 376.70L1225.03 393.20L1228.77 376.70L1232.51 393.20L1236.25 376.70L1239.99 393.20L1243.73 376.70L1247.47 393.20L1251.21 376.70L1254.95 393.20L1258.69 376.70L1262.43 393.20L1266.17 376.70L1269.91 393.20L1273.65 376.70L1277.39 393.20" fill="none" stroke="#ffffff" stroke-width="1.95" stroke-linejoin="round"/><path d="M664 375.8H1281M664 394.1H1281" stroke="#ffffff" stroke-width="2"/><path d="M1281.0 375.3L1281.0 394.6" stroke="#ffffff" stroke-width="1.1"/><defs><clipPath id="hbc"><path clip-rule="evenodd" d="M665 412.2H822.4V568.4H665ZM755.2 435.5H798V496.9H755.2Z"/></clipPath></defs><path d="M643.8 390.2L666.2 412.6M666.2 412.6L677.4 401.4M688.6 390.2L711.0 412.6M711.0 412.6L722.2 401.4M688.6 390.2L666.2 412.6M666.2 412.6L677.4 423.8M677.4 423.8L699.8 401.4M643.8 412.6L666.2 435.0M666.2 435.0L677.4 423.8M677.4 423.8L655.0 401.4M733.4 390.2L755.8 412.6M755.8 412.6L767.0 401.4M733.4 390.2L711.0 412.6M711.0 412.6L722.2 423.8M722.2 423.8L744.6 401.4M699.8 401.4L688.6 412.6M688.6 412.6L711.0 435.0M711.0 435.0L722.2 423.8M722.2 423.8L699.8 401.4M688.6 412.6L666.2 435.0M666.2 435.0L677.4 446.2M677.4 446.2L699.8 423.8M699.8 423.8L688.6 412.6M643.8 435.0L666.2 457.4M666.2 457.4L677.4 446.2M677.4 446.2L655.0 423.8M778.2 390.2L800.6 412.6M800.6 412.6L811.8 401.4M778.2 390.2L755.8 412.6M755.8 412.6L767.0 423.8M767.0 423.8L789.4 401.4M744.6 401.4L733.4 412.6M733.4 412.6L755.8 435.0M755.8 435.0L767.0 423.8M767.0 423.8L744.6 401.4M733.4 412.6L711.0 435.0M711.0 435.0L722.2 446.2M722.2 446.2L744.6 423.8M744.6 423.8L733.4 412.6M699.8 423.8L688.6 435.0M688.6 435.0L711.0 457.4M711.0 457.4L722.2 446.2M722.2 446.2L699.8 423.8M688.6 435.0L666.2 457.4M666.2 457.4L677.4 468.6M677.4 468.6L699.8 446.2M699.8 446.2L688.6 435.0M643.8 457.4L666.2 479.8M666.2 479.8L677.4 468.6M677.4 468.6L655.0 446.2M823.0 390.2L845.4 412.6M823.0 390.2L800.6 412.6M800.6 412.6L811.8 423.8M811.8 423.8L834.2 401.4M789.4 401.4L778.2 412.6M778.2 412.6L800.6 435.0M800.6 435.0L811.8 423.8M811.8 423.8L789.4 401.4M778.2 412.6L755.8 435.0M755.8 435.0L767.0 446.2M767.0 446.2L789.4 423.8M789.4 423.8L778.2 412.6M744.6 423.8L733.4 435.0M733.4 435.0L755.8 457.4M755.8 457.4L767.0 446.2M767.0 446.2L744.6 423.8M733.4 435.0L711.0 457.4M711.0 457.4L722.2 468.6M722.2 468.6L744.6 446.2M744.6 446.2L733.4 435.0M699.8 446.2L688.6 457.4M688.6 457.4L711.0 479.8M711.0 479.8L722.2 468.6M722.2 468.6L699.8 446.2M688.6 457.4L666.2 479.8M666.2 479.8L677.4 491.0M677.4 491.0L699.8 468.6M699.8 468.6L688.6 457.4M643.8 479.8L666.2 502.2M666.2 502.2L677.4 491.0M677.4 491.0L655.0 468.6M834.2 401.4L823.0 412.6M823.0 412.6L845.4 435.0M823.0 412.6L800.6 435.0M800.6 435.0L811.8 446.2M811.8 446.2L834.2 423.8M834.2 423.8L823.0 412.6M789.4 423.8L778.2 435.0M778.2 435.0L800.6 457.4M800.6 457.4L811.8 446.2M811.8 446.2L789.4 423.8M778.2 435.0L755.8 457.4M755.8 457.4L767.0 468.6M767.0 468.6L789.4 446.2M789.4 446.2L778.2 435.0M744.6 446.2L733.4 457.4M733.4 457.4L755.8 479.8M755.8 479.8L767.0 468.6M767.0 468.6L744.6 446.2M733.4 457.4L711.0 479.8M711.0 479.8L722.2 491.0M722.2 491.0L744.6 468.6M744.6 468.6L733.4 457.4M699.8 468.6L688.6 479.8M688.6 479.8L711.0 502.2M711.0 502.2L722.2 491.0M722.2 491.0L699.8 468.6M688.6 479.8L666.2 502.2M666.2 502.2L677.4 513.4M677.4 513.4L699.8 491.0M699.8 491.0L688.6 479.8M643.8 502.2L666.2 524.6M666.2 524.6L677.4 513.4M677.4 513.4L655.0 491.0M834.2 423.8L823.0 435.0M823.0 435.0L845.4 457.4M823.0 435.0L800.6 457.4M800.6 457.4L811.8 468.6M811.8 468.6L834.2 446.2M834.2 446.2L823.0 435.0M789.4 446.2L778.2 457.4M778.2 457.4L800.6 479.8M800.6 479.8L811.8 468.6M811.8 468.6L789.4 446.2M778.2 457.4L755.8 479.8M755.8 479.8L767.0 491.0M767.0 491.0L789.4 468.6M789.4 468.6L778.2 457.4M744.6 468.6L733.4 479.8M733.4 479.8L755.8 502.2M755.8 502.2L767.0 491.0M767.0 491.0L744.6 468.6M733.4 479.8L711.0 502.2M711.0 502.2L722.2 513.4M722.2 513.4L744.6 491.0M744.6 491.0L733.4 479.8M699.8 491.0L688.6 502.2M688.6 502.2L711.0 524.6M711.0 524.6L722.2 513.4M722.2 513.4L699.8 491.0M688.6 502.2L666.2 524.6M666.2 524.6L677.4 535.8M677.4 535.8L699.8 513.4M699.8 513.4L688.6 502.2M643.8 524.6L666.2 547.0M666.2 547.0L677.4 535.8M677.4 535.8L655.0 513.4M834.2 446.2L823.0 457.4M823.0 457.4L845.4 479.8M823.0 457.4L800.6 479.8M800.6 479.8L811.8 491.0M811.8 491.0L834.2 468.6M834.2 468.6L823.0 457.4M789.4 468.6L778.2 479.8M778.2 479.8L800.6 502.2M800.6 502.2L811.8 491.0M811.8 491.0L789.4 468.6M778.2 479.8L755.8 502.2M755.8 502.2L767.0 513.4M767.0 513.4L789.4 491.0M789.4 491.0L778.2 479.8M744.6 491.0L733.4 502.2M733.4 502.2L755.8 524.6M755.8 524.6L767.0 513.4M767.0 513.4L744.6 491.0M733.4 502.2L711.0 524.6M711.0 524.6L722.2 535.8M722.2 535.8L744.6 513.4M744.6 513.4L733.4 502.2M699.8 513.4L688.6 524.6M688.6 524.6L711.0 547.0M711.0 547.0L722.2 535.8M722.2 535.8L699.8 513.4M688.6 524.6L666.2 547.0M666.2 547.0L677.4 558.2M677.4 558.2L699.8 535.8M699.8 535.8L688.6 524.6M643.8 547.0L666.2 569.4M666.2 569.4L677.4 558.2M677.4 558.2L655.0 535.8M834.2 468.6L823.0 479.8M823.0 479.8L845.4 502.2M823.0 479.8L800.6 502.2M800.6 502.2L811.8 513.4M811.8 513.4L834.2 491.0M834.2 491.0L823.0 479.8M789.4 491.0L778.2 502.2M778.2 502.2L800.6 524.6M800.6 524.6L811.8 513.4M811.8 513.4L789.4 491.0M778.2 502.2L755.8 524.6M755.8 524.6L767.0 535.8M767.0 535.8L789.4 513.4M789.4 513.4L778.2 502.2M744.6 513.4L733.4 524.6M733.4 524.6L755.8 547.0M755.8 547.0L767.0 535.8M767.0 535.8L744.6 513.4M733.4 524.6L711.0 547.0M711.0 547.0L722.2 558.2M722.2 558.2L744.6 535.8M744.6 535.8L733.4 524.6M699.8 535.8L688.6 547.0M688.6 547.0L711.0 569.4M711.0 569.4L722.2 558.2M722.2 558.2L699.8 535.8M688.6 547.0L666.2 569.4M666.2 569.4L677.4 580.6M677.4 580.6L699.8 558.2M699.8 558.2L688.6 547.0M643.8 569.4L666.2 591.8M677.4 580.6L655.0 558.2M834.2 491.0L823.0 502.2M823.0 502.2L845.4 524.6M823.0 502.2L800.6 524.6M800.6 524.6L811.8 535.8M811.8 535.8L834.2 513.4M834.2 513.4L823.0 502.2M789.4 513.4L778.2 524.6M778.2 524.6L800.6 547.0M800.6 547.0L811.8 535.8M811.8 535.8L789.4 513.4M778.2 524.6L755.8 547.0M755.8 547.0L767.0 558.2M767.0 558.2L789.4 535.8M789.4 535.8L778.2 524.6M744.6 535.8L733.4 547.0M733.4 547.0L755.8 569.4M755.8 569.4L767.0 558.2M767.0 558.2L744.6 535.8M733.4 547.0L711.0 569.4M711.0 569.4L722.2 580.6M722.2 580.6L744.6 558.2M744.6 558.2L733.4 547.0M699.8 558.2L688.6 569.4M688.6 569.4L711.0 591.8M722.2 580.6L699.8 558.2M688.6 569.4L666.2 591.8M699.8 580.6L688.6 569.4M834.2 513.4L823.0 524.6M823.0 524.6L845.4 547.0M823.0 524.6L800.6 547.0M800.6 547.0L811.8 558.2M811.8 558.2L834.2 535.8M834.2 535.8L823.0 524.6M789.4 535.8L778.2 547.0M778.2 547.0L800.6 569.4M800.6 569.4L811.8 558.2M811.8 558.2L789.4 535.8M778.2 547.0L755.8 569.4M755.8 569.4L767.0 580.6M767.0 580.6L789.4 558.2M789.4 558.2L778.2 547.0M744.6 558.2L733.4 569.4M733.4 569.4L755.8 591.8M767.0 580.6L744.6 558.2M733.4 569.4L711.0 591.8M744.6 580.6L733.4 569.4M834.2 535.8L823.0 547.0M823.0 547.0L845.4 569.4M823.0 547.0L800.6 569.4M800.6 569.4L811.8 580.6M811.8 580.6L834.2 558.2M834.2 558.2L823.0 547.0M789.4 558.2L778.2 569.4M778.2 569.4L800.6 591.8M811.8 580.6L789.4 558.2M778.2 569.4L755.8 591.8M789.4 580.6L778.2 569.4M834.2 558.2L823.0 569.4M823.0 569.4L845.4 591.8M823.0 569.4L800.6 591.8M834.2 580.6L823.0 569.4" fill="none" stroke="#e8e8e8" stroke-width="1.1" clip-path="url(#hbc)"/><rect x="665" y="412.2" width="157.4" height="156.2" fill="none" stroke="#ffffff" stroke-width="1.3"/><rect x="755.2" y="435.5" width="42.8" height="61.4" fill="none" stroke="#ffffff" stroke-width="1.3"/><rect x="660.8" y="562.3" width="10.6" height="10.8" fill="none" stroke="#ffffff" stroke-width="1.1"/><path d="M665.0 496.0L665.0 568.4" stroke="#ffffff" stroke-width="1.4"/><path d="M665.0 568.4L728.0 568.4" stroke="#ffffff" stroke-width="1.5"/><path d="M667.0 487.0L674.0 494.5" stroke="#e8e8e8" stroke-width="1"/><path d="M681.0 486.5L674.0 494.5" stroke="#e8e8e8" stroke-width="1"/><path d="M674.0 494.5L674.0 502.0" stroke="#e8e8e8" stroke-width="1"/><path d="M675.5 493.0L681.5 487.0" stroke="#e8e8e8" stroke-width="1"/><path d="M732.0 552.0L746.0 565.5" stroke="#e8e8e8" stroke-width="1"/><path d="M746.0 552.0L732.0 567.0" stroke="#e8e8e8" stroke-width="1"/><path d="M744.5 551.0L731.0 565.0" stroke="#e8e8e8" stroke-width="1"/><rect x="899" y="412.5" width="156.8" height="156.7" fill="none" stroke="#ffffff" stroke-width="1.3"/><rect x="906" y="422" width="1" height="1" fill="#f2f2f2"/><rect x="905" y="428" width="1" height="1" fill="#f2f2f2"/><rect x="905" y="437" width="1" height="1" fill="#f2f2f2"/><rect x="902" y="443" width="1" height="1" fill="#f2f2f2"/><rect x="908" y="454" width="1" height="1" fill="#f2f2f2"/><rect x="909" y="465" width="1" height="1" fill="#f2f2f2"/><rect x="906" y="467" width="1" height="1" fill="#f2f2f2"/><rect x="902" y="484" width="1" height="1" fill="#f2f2f2"/><rect x="901" y="495" width="1" height="1" fill="#f2f2f2"/><rect x="908" y="504" width="1" height="1" fill="#f2f2f2"/><rect x="905" y="514" width="1" height="1" fill="#f2f2f2"/><rect x="903" y="525" width="1" height="1" fill="#f2f2f2"/><rect x="908" y="531" width="1" height="1" fill="#f2f2f2"/><rect x="903" y="536" width="1" height="1" fill="#f2f2f2"/><rect x="908" y="545" width="1" height="1" fill="#f2f2f2"/><rect x="904" y="558" width="1" height="1" fill="#f2f2f2"/><rect x="901" y="561" width="1" height="1" fill="#f2f2f2"/><rect x="913" y="423" width="1" height="1" fill="#f2f2f2"/><rect x="910" y="428" width="1" height="1" fill="#f2f2f2"/><rect x="912" y="432" width="1" height="1" fill="#f2f2f2"/><rect x="918" y="446" width="1" height="1" fill="#f2f2f2"/><rect x="912" y="449" width="1" height="1" fill="#f2f2f2"/><rect x="916" y="458" width="1" height="1" fill="#f2f2f2"/><rect x="913" y="467" width="1" height="1" fill="#f2f2f2"/><rect x="911" y="479" width="1" height="1" fill="#f2f2f2"/><rect x="913" y="484" width="1" height="1" fill="#f2f2f2"/><rect x="918" y="498" width="1" height="1" fill="#f2f2f2"/><rect x="917" y="501" width="1" height="1" fill="#f2f2f2"/><rect x="917" y="513" width="1" height="1" fill="#f2f2f2"/><rect x="918" y="518" width="1" height="1" fill="#f2f2f2"/><rect x="916" y="528" width="1" height="1" fill="#f2f2f2"/><rect x="910" y="534" width="1" height="1" fill="#f2f2f2"/><rect x="912" y="547" width="1" height="1" fill="#f2f2f2"/><rect x="913" y="558" width="1" height="1" fill="#f2f2f2"/><rect x="914" y="566" width="1" height="1" fill="#f2f2f2"/><rect x="919" y="422" width="1" height="1" fill="#f2f2f2"/><rect x="920" y="425" width="1" height="1" fill="#f2f2f2"/><rect x="926" y="433" width="1" height="1" fill="#f2f2f2"/><rect x="925" y="445" width="1" height="1" fill="#f2f2f2"/><rect x="919" y="449" width="1" height="1" fill="#f2f2f2"/><rect x="920" y="463" width="1" height="1" fill="#f2f2f2"/><rect x="925" y="470" width="1" height="1" fill="#f2f2f2"/><rect x="919" y="480" width="1" height="1" fill="#f2f2f2"/><rect x="920" y="487" width="1" height="1" fill="#f2f2f2"/><rect x="923" y="493" width="1" height="1" fill="#f2f2f2"/><rect x="920" y="500" width="1" height="1" fill="#f2f2f2"/><rect x="922" y="508" width="1" height="1" fill="#f2f2f2"/><rect x="921" y="521" width="1" height="1" fill="#f2f2f2"/><rect x="921" y="532" width="1" height="1" fill="#f2f2f2"/><rect x="924" y="539" width="1" height="1" fill="#f2f2f2"/><rect x="919" y="542" width="1" height="1" fill="#f2f2f2"/><rect x="924" y="567" width="1" height="1" fill="#f2f2f2"/><rect x="931" y="429" width="1" height="1" fill="#f2f2f2"/><rect x="935" y="432" width="1" height="1" fill="#f2f2f2"/><rect x="933" y="448" width="1" height="1" fill="#f2f2f2"/><rect x="932" y="455" width="1" height="1" fill="#f2f2f2"/><rect x="929" y="463" width="1" height="1" fill="#f2f2f2"/><rect x="934" y="469" width="1" height="1" fill="#f2f2f2"/><rect x="934" y="479" width="1" height="1" fill="#f2f2f2"/><rect x="930" y="487" width="1" height="1" fill="#f2f2f2"/><rect x="927" y="496" width="1" height="1" fill="#f2f2f2"/><rect x="934" y="506" width="1" height="1" fill="#f2f2f2"/><rect x="933" y="513" width="1" height="1" fill="#f2f2f2"/><rect x="934" y="517" width="1" height="1" fill="#f2f2f2"/><rect x="927" y="530" width="1" height="1" fill="#f2f2f2"/><rect x="928" y="539" width="1" height="1" fill="#f2f2f2"/><rect x="932" y="550" width="1" height="1" fill="#f2f2f2"/><rect x="927" y="553" width="1" height="1" fill="#f2f2f2"/><rect x="928" y="560" width="1" height="1" fill="#f2f2f2"/><rect x="941" y="418" width="1" height="1" fill="#f2f2f2"/><rect x="938" y="429" width="1" height="1" fill="#f2f2f2"/><rect x="939" y="438" width="1" height="1" fill="#f2f2f2"/><rect x="942" y="443" width="1" height="1" fill="#f2f2f2"/><rect x="938" y="450" width="1" height="1" fill="#f2f2f2"/><rect x="942" y="464" width="1" height="1" fill="#f2f2f2"/><rect x="943" y="468" width="1" height="1" fill="#f2f2f2"/><rect x="939" y="476" width="1" height="1" fill="#f2f2f2"/><rect x="938" y="488" width="1" height="1" fill="#f2f2f2"/><rect x="938" y="498" width="1" height="1" fill="#f2f2f2"/><rect x="939" y="500" width="1" height="1" fill="#f2f2f2"/><rect x="935" y="522" width="1" height="1" fill="#f2f2f2"/><rect x="938" y="532" width="1" height="1" fill="#f2f2f2"/><rect x="939" y="542" width="1" height="1" fill="#f2f2f2"/><rect x="937" y="552" width="1" height="1" fill="#f2f2f2"/><rect x="940" y="563" width="1" height="1" fill="#f2f2f2"/><rect x="949" y="421" width="1" height="1" fill="#f2f2f2"/><rect x="949" y="425" width="1" height="1" fill="#f2f2f2"/><rect x="945" y="432" width="1" height="1" fill="#f2f2f2"/><rect x="950" y="441" width="1" height="1" fill="#f2f2f2"/><rect x="946" y="454" width="1" height="1" fill="#f2f2f2"/><rect x="949" y="463" width="1" height="1" fill="#f2f2f2"/><rect x="950" y="473" width="1" height="1" fill="#f2f2f2"/><rect x="951" y="480" width="1" height="1" fill="#f2f2f2"/><rect x="947" y="488" width="1" height="1" fill="#f2f2f2"/><rect x="947" y="496" width="1" height="1" fill="#f2f2f2"/><rect x="950" y="507" width="1" height="1" fill="#f2f2f2"/><rect x="949" y="510" width="1" height="1" fill="#f2f2f2"/><rect x="950" y="522" width="1" height="1" fill="#f2f2f2"/><rect x="945" y="532" width="1" height="1" fill="#f2f2f2"/><rect x="952" y="538" width="1" height="1" fill="#f2f2f2"/><rect x="946" y="550" width="1" height="1" fill="#f2f2f2"/><rect x="946" y="551" width="1" height="1" fill="#f2f2f2"/><rect x="948" y="565" width="1" height="1" fill="#f2f2f2"/><rect x="952" y="421" width="1" height="1" fill="#f2f2f2"/><rect x="959" y="424" width="1" height="1" fill="#f2f2f2"/><rect x="959" y="433" width="1" height="1" fill="#f2f2f2"/><rect x="956" y="446" width="1" height="1" fill="#f2f2f2"/><rect x="958" y="456" width="1" height="1" fill="#f2f2f2"/><rect x="960" y="458" width="1" height="1" fill="#f2f2f2"/><rect x="956" y="468" width="1" height="1" fill="#f2f2f2"/><rect x="957" y="478" width="1" height="1" fill="#f2f2f2"/><rect x="957" y="485" width="1" height="1" fill="#f2f2f2"/><rect x="959" y="499" width="1" height="1" fill="#f2f2f2"/><rect x="959" y="508" width="1" height="1" fill="#f2f2f2"/><rect x="957" y="510" width="1" height="1" fill="#f2f2f2"/><rect x="956" y="522" width="1" height="1" fill="#f2f2f2"/><rect x="956" y="537" width="1" height="1" fill="#f2f2f2"/><rect x="957" y="546" width="1" height="1" fill="#f2f2f2"/><rect x="952" y="555" width="1" height="1" fill="#f2f2f2"/><rect x="960" y="567" width="1" height="1" fill="#f2f2f2"/><rect x="964" y="416" width="1" height="1" fill="#f2f2f2"/><rect x="967" y="431" width="1" height="1" fill="#f2f2f2"/><rect x="963" y="433" width="1" height="1" fill="#f2f2f2"/><rect x="968" y="441" width="1" height="1" fill="#f2f2f2"/><rect x="961" y="450" width="1" height="1" fill="#f2f2f2"/><rect x="966" y="460" width="1" height="1" fill="#f2f2f2"/><rect x="966" y="466" width="1" height="1" fill="#f2f2f2"/><rect x="961" y="478" width="1" height="1" fill="#f2f2f2"/><rect x="962" y="487" width="1" height="1" fill="#f2f2f2"/><rect x="964" y="494" width="1" height="1" fill="#f2f2f2"/><rect x="962" y="501" width="1" height="1" fill="#f2f2f2"/><rect x="966" y="512" width="1" height="1" fill="#f2f2f2"/><rect x="966" y="524" width="1" height="1" fill="#f2f2f2"/><rect x="967" y="532" width="1" height="1" fill="#f2f2f2"/><rect x="963" y="536" width="1" height="1" fill="#f2f2f2"/><rect x="962" y="550" width="1" height="1" fill="#f2f2f2"/><rect x="962" y="552" width="1" height="1" fill="#f2f2f2"/><rect x="963" y="560" width="1" height="1" fill="#f2f2f2"/><rect x="972" y="421" width="1" height="1" fill="#f2f2f2"/><rect x="972" y="429" width="1" height="1" fill="#f2f2f2"/><rect x="975" y="448" width="1" height="1" fill="#f2f2f2"/><rect x="970" y="453" width="1" height="1" fill="#f2f2f2"/><rect x="973" y="463" width="1" height="1" fill="#f2f2f2"/><rect x="970" y="466" width="1" height="1" fill="#f2f2f2"/><rect x="973" y="487" width="1" height="1" fill="#f2f2f2"/><rect x="970" y="493" width="1" height="1" fill="#f2f2f2"/><rect x="977" y="507" width="1" height="1" fill="#f2f2f2"/><rect x="969" y="516" width="1" height="1" fill="#f2f2f2"/><rect x="975" y="519" width="1" height="1" fill="#f2f2f2"/><rect x="973" y="529" width="1" height="1" fill="#f2f2f2"/><rect x="969" y="539" width="1" height="1" fill="#f2f2f2"/><rect x="970" y="546" width="1" height="1" fill="#f2f2f2"/><rect x="972" y="552" width="1" height="1" fill="#f2f2f2"/><rect x="973" y="559" width="1" height="1" fill="#f2f2f2"/><rect x="984" y="420" width="1" height="1" fill="#f2f2f2"/><rect x="983" y="426" width="1" height="1" fill="#f2f2f2"/><rect x="982" y="440" width="1" height="1" fill="#f2f2f2"/><rect x="980" y="448" width="1" height="1" fill="#f2f2f2"/><rect x="984" y="455" width="1" height="1" fill="#f2f2f2"/><rect x="985" y="464" width="1" height="1" fill="#f2f2f2"/><rect x="984" y="472" width="1" height="1" fill="#f2f2f2"/><rect x="984" y="475" width="1" height="1" fill="#f2f2f2"/><rect x="981" y="483" width="1" height="1" fill="#f2f2f2"/><rect x="983" y="496" width="1" height="1" fill="#f2f2f2"/><rect x="985" y="505" width="1" height="1" fill="#f2f2f2"/><rect x="983" y="513" width="1" height="1" fill="#f2f2f2"/><rect x="981" y="525" width="1" height="1" fill="#f2f2f2"/><rect x="983" y="531" width="1" height="1" fill="#f2f2f2"/><rect x="978" y="539" width="1" height="1" fill="#f2f2f2"/><rect x="980" y="545" width="1" height="1" fill="#f2f2f2"/><rect x="979" y="554" width="1" height="1" fill="#f2f2f2"/><rect x="980" y="566" width="1" height="1" fill="#f2f2f2"/><rect x="990" y="423" width="1" height="1" fill="#f2f2f2"/><rect x="994" y="428" width="1" height="1" fill="#f2f2f2"/><rect x="987" y="437" width="1" height="1" fill="#f2f2f2"/><rect x="986" y="448" width="1" height="1" fill="#f2f2f2"/><rect x="990" y="450" width="1" height="1" fill="#f2f2f2"/><rect x="991" y="457" width="1" height="1" fill="#f2f2f2"/><rect x="989" y="470" width="1" height="1" fill="#f2f2f2"/><rect x="989" y="476" width="1" height="1" fill="#f2f2f2"/><rect x="991" y="485" width="1" height="1" fill="#f2f2f2"/><rect x="988" y="491" width="1" height="1" fill="#f2f2f2"/><rect x="986" y="501" width="1" height="1" fill="#f2f2f2"/><rect x="989" y="515" width="1" height="1" fill="#f2f2f2"/><rect x="986" y="525" width="1" height="1" fill="#f2f2f2"/><rect x="987" y="533" width="1" height="1" fill="#f2f2f2"/><rect x="990" y="542" width="1" height="1" fill="#f2f2f2"/><rect x="990" y="550" width="1" height="1" fill="#f2f2f2"/><rect x="990" y="559" width="1" height="1" fill="#f2f2f2"/><rect x="991" y="560" width="1" height="1" fill="#f2f2f2"/><rect x="998" y="416" width="1" height="1" fill="#f2f2f2"/><rect x="999" y="424" width="1" height="1" fill="#f2f2f2"/><rect x="1000" y="435" width="1" height="1" fill="#f2f2f2"/><rect x="999" y="444" width="1" height="1" fill="#f2f2f2"/><rect x="999" y="457" width="1" height="1" fill="#f2f2f2"/><rect x="1001" y="459" width="1" height="1" fill="#f2f2f2"/><rect x="1002" y="472" width="1" height="1" fill="#f2f2f2"/><rect x="997" y="476" width="1" height="1" fill="#f2f2f2"/><rect x="999" y="487" width="1" height="1" fill="#f2f2f2"/><rect x="1001" y="493" width="1" height="1" fill="#f2f2f2"/><rect x="1003" y="507" width="1" height="1" fill="#f2f2f2"/><rect x="995" y="508" width="1" height="1" fill="#f2f2f2"/><rect x="998" y="522" width="1" height="1" fill="#f2f2f2"/><rect x="999" y="525" width="1" height="1" fill="#f2f2f2"/><rect x="1000" y="538" width="1" height="1" fill="#f2f2f2"/><rect x="998" y="546" width="1" height="1" fill="#f2f2f2"/><rect x="997" y="557" width="1" height="1" fill="#f2f2f2"/><rect x="995" y="560" width="1" height="1" fill="#f2f2f2"/><rect x="1008" y="421" width="1" height="1" fill="#f2f2f2"/><rect x="1006" y="425" width="1" height="1" fill="#f2f2f2"/><rect x="1006" y="437" width="1" height="1" fill="#f2f2f2"/><rect x="1006" y="445" width="1" height="1" fill="#f2f2f2"/><rect x="1011" y="452" width="1" height="1" fill="#f2f2f2"/><rect x="1004" y="464" width="1" height="1" fill="#f2f2f2"/><rect x="1004" y="470" width="1" height="1" fill="#f2f2f2"/><rect x="1009" y="476" width="1" height="1" fill="#f2f2f2"/><rect x="1004" y="484" width="1" height="1" fill="#f2f2f2"/><rect x="1004" y="493" width="1" height="1" fill="#f2f2f2"/><rect x="1009" y="502" width="1" height="1" fill="#f2f2f2"/><rect x="1006" y="514" width="1" height="1" fill="#f2f2f2"/><rect x="1004" y="522" width="1" height="1" fill="#f2f2f2"/><rect x="1011" y="533" width="1" height="1" fill="#f2f2f2"/><rect x="1007" y="540" width="1" height="1" fill="#f2f2f2"/><rect x="1006" y="545" width="1" height="1" fill="#f2f2f2"/><rect x="1010" y="552" width="1" height="1" fill="#f2f2f2"/><rect x="1006" y="562" width="1" height="1" fill="#f2f2f2"/><rect x="1015" y="416" width="1" height="1" fill="#f2f2f2"/><rect x="1018" y="428" width="1" height="1" fill="#f2f2f2"/><rect x="1016" y="433" width="1" height="1" fill="#f2f2f2"/><rect x="1019" y="442" width="1" height="1" fill="#f2f2f2"/><rect x="1016" y="462" width="1" height="1" fill="#f2f2f2"/><rect x="1017" y="472" width="1" height="1" fill="#f2f2f2"/><rect x="1016" y="481" width="1" height="1" fill="#f2f2f2"/><rect x="1012" y="489" width="1" height="1" fill="#f2f2f2"/><rect x="1012" y="496" width="1" height="1" fill="#f2f2f2"/><rect x="1018" y="505" width="1" height="1" fill="#f2f2f2"/><rect x="1013" y="514" width="1" height="1" fill="#f2f2f2"/><rect x="1018" y="520" width="1" height="1" fill="#f2f2f2"/><rect x="1020" y="531" width="1" height="1" fill="#f2f2f2"/><rect x="1016" y="539" width="1" height="1" fill="#f2f2f2"/><rect x="1019" y="545" width="1" height="1" fill="#f2f2f2"/><rect x="1017" y="558" width="1" height="1" fill="#f2f2f2"/><rect x="1018" y="566" width="1" height="1" fill="#f2f2f2"/><rect x="1025" y="419" width="1" height="1" fill="#f2f2f2"/><rect x="1027" y="427" width="1" height="1" fill="#f2f2f2"/><rect x="1021" y="438" width="1" height="1" fill="#f2f2f2"/><rect x="1023" y="441" width="1" height="1" fill="#f2f2f2"/><rect x="1023" y="451" width="1" height="1" fill="#f2f2f2"/><rect x="1020" y="460" width="1" height="1" fill="#f2f2f2"/><rect x="1025" y="472" width="1" height="1" fill="#f2f2f2"/><rect x="1020" y="478" width="1" height="1" fill="#f2f2f2"/><rect x="1028" y="483" width="1" height="1" fill="#f2f2f2"/><rect x="1021" y="493" width="1" height="1" fill="#f2f2f2"/><rect x="1026" y="504" width="1" height="1" fill="#f2f2f2"/><rect x="1021" y="510" width="1" height="1" fill="#f2f2f2"/><rect x="1026" y="519" width="1" height="1" fill="#f2f2f2"/><rect x="1027" y="529" width="1" height="1" fill="#f2f2f2"/><rect x="1027" y="541" width="1" height="1" fill="#f2f2f2"/><rect x="1024" y="550" width="1" height="1" fill="#f2f2f2"/><rect x="1022" y="551" width="1" height="1" fill="#f2f2f2"/><rect x="1027" y="562" width="1" height="1" fill="#f2f2f2"/><rect x="1033" y="417" width="1" height="1" fill="#f2f2f2"/><rect x="1034" y="425" width="1" height="1" fill="#f2f2f2"/><rect x="1031" y="447" width="1" height="1" fill="#f2f2f2"/><rect x="1033" y="450" width="1" height="1" fill="#f2f2f2"/><rect x="1031" y="459" width="1" height="1" fill="#f2f2f2"/><rect x="1033" y="471" width="1" height="1" fill="#f2f2f2"/><rect x="1031" y="478" width="1" height="1" fill="#f2f2f2"/><rect x="1035" y="482" width="1" height="1" fill="#f2f2f2"/><rect x="1036" y="498" width="1" height="1" fill="#f2f2f2"/><rect x="1031" y="505" width="1" height="1" fill="#f2f2f2"/><rect x="1032" y="512" width="1" height="1" fill="#f2f2f2"/><rect x="1033" y="524" width="1" height="1" fill="#f2f2f2"/><rect x="1035" y="528" width="1" height="1" fill="#f2f2f2"/><rect x="1029" y="540" width="1" height="1" fill="#f2f2f2"/><rect x="1033" y="546" width="1" height="1" fill="#f2f2f2"/><rect x="1035" y="553" width="1" height="1" fill="#f2f2f2"/><rect x="1029" y="561" width="1" height="1" fill="#f2f2f2"/><rect x="1043" y="418" width="1" height="1" fill="#f2f2f2"/><rect x="1038" y="426" width="1" height="1" fill="#f2f2f2"/><rect x="1045" y="439" width="1" height="1" fill="#f2f2f2"/><rect x="1037" y="443" width="1" height="1" fill="#f2f2f2"/><rect x="1039" y="453" width="1" height="1" fill="#f2f2f2"/><rect x="1037" y="465" width="1" height="1" fill="#f2f2f2"/><rect x="1039" y="471" width="1" height="1" fill="#f2f2f2"/><rect x="1040" y="479" width="1" height="1" fill="#f2f2f2"/><rect x="1040" y="486" width="1" height="1" fill="#f2f2f2"/><rect x="1039" y="493" width="1" height="1" fill="#f2f2f2"/><rect x="1040" y="507" width="1" height="1" fill="#f2f2f2"/><rect x="1043" y="511" width="1" height="1" fill="#f2f2f2"/><rect x="1038" y="518" width="1" height="1" fill="#f2f2f2"/><rect x="1043" y="531" width="1" height="1" fill="#f2f2f2"/><rect x="1040" y="540" width="1" height="1" fill="#f2f2f2"/><rect x="1038" y="544" width="1" height="1" fill="#f2f2f2"/><rect x="1038" y="554" width="1" height="1" fill="#f2f2f2"/><rect x="1045" y="562" width="1" height="1" fill="#f2f2f2"/><rect x="1051" y="421" width="1" height="1" fill="#f2f2f2"/><rect x="1049" y="426" width="1" height="1" fill="#f2f2f2"/><rect x="1045" y="435" width="1" height="1" fill="#f2f2f2"/><rect x="1054" y="447" width="1" height="1" fill="#f2f2f2"/><rect x="1050" y="449" width="1" height="1" fill="#f2f2f2"/><rect x="1048" y="462" width="1" height="1" fill="#f2f2f2"/><rect x="1049" y="470" width="1" height="1" fill="#f2f2f2"/><rect x="1052" y="479" width="1" height="1" fill="#f2f2f2"/><rect x="1052" y="490" width="1" height="1" fill="#f2f2f2"/><rect x="1048" y="495" width="1" height="1" fill="#f2f2f2"/><rect x="1051" y="508" width="1" height="1" fill="#f2f2f2"/><rect x="1051" y="515" width="1" height="1" fill="#f2f2f2"/><rect x="1053" y="522" width="1" height="1" fill="#f2f2f2"/><rect x="1046" y="527" width="1" height="1" fill="#f2f2f2"/><rect x="1051" y="536" width="1" height="1" fill="#f2f2f2"/><rect x="1048" y="546" width="1" height="1" fill="#f2f2f2"/><rect x="1054" y="551" width="1" height="1" fill="#f2f2f2"/><rect x="1050" y="564" width="1" height="1" fill="#f2f2f2"/><path d="M909.4 429.2L906.2 431.3L906.0 427.5Z" fill="#7c8086" stroke="#f4f4f4" stroke-width="0.95"/><path d="M904.8 447.2L903.7 443.4L907.5 444.3Z" fill="#7c8086" stroke="#f4f4f4" stroke-width="0.95"/><path d="M912.1 463.5L909.5 461.6L912.5 460.3Z" fill="#7c8086" stroke="#f4f4f4" stroke-width="0.95"/><path d="M916.0 512.2L918.5 513.5L916.2 514.9Z" fill="#7c8086" stroke="#f4f4f4" stroke-width="0.95"/><path d="M911.7 521.6L915.5 521.8L913.5 525.0Z" fill="#7c8086" stroke="#f4f4f4" stroke-width="0.95"/><path d="M908.5 554.4L909.6 551.3L911.7 553.7Z" fill="#7c8086" stroke="#f4f4f4" stroke-width="0.95"/><path d="M925.9 420.0L928.7 419.8L927.6 422.3Z" fill="#7c8086" stroke="#f4f4f4" stroke-width="0.95"/><path d="M922.4 444.8L918.6 443.3L921.8 440.7Z" fill="#7c8086" stroke="#f4f4f4" stroke-width="0.95"/><path d="M925.3 454.8L928.7 455.7L926.2 458.2Z" fill="#7c8086" stroke="#f4f4f4" stroke-width="0.95"/><path d="M932.7 473.9L929.5 475.9L929.3 472.1Z" fill="#7c8086" stroke="#f4f4f4" stroke-width="0.95"/><path d="M923.8 489.1L927.8 488.7L926.2 492.3Z" fill="#7c8086" stroke="#f4f4f4" stroke-width="0.95"/><path d="M928.8 505.8L927.6 508.3L926.0 506.1Z" fill="#7c8086" stroke="#f4f4f4" stroke-width="0.95"/><path d="M930.8 543.1L934.4 543.4L932.3 546.4Z" fill="#7c8086" stroke="#f4f4f4" stroke-width="0.95"/><path d="M929.6 553.4L926.7 552.6L928.8 550.5Z" fill="#7c8086" stroke="#f4f4f4" stroke-width="0.95"/><path d="M941.9 416.2L944.3 418.2L941.3 419.3Z" fill="#7c8086" stroke="#f4f4f4" stroke-width="0.95"/><path d="M941.4 440.5L940.1 438.7L942.3 438.5Z" fill="#7c8086" stroke="#f4f4f4" stroke-width="0.95"/><path d="M951.3 458.3L950.7 461.2L948.5 459.3Z" fill="#7c8086" stroke="#f4f4f4" stroke-width="0.95"/><path d="M938.1 476.5L942.0 476.1L940.4 479.7Z" fill="#7c8086" stroke="#f4f4f4" stroke-width="0.95"/><path d="M940.0 507.8L938.6 509.3L938.0 507.4Z" fill="#7c8086" stroke="#f4f4f4" stroke-width="0.95"/><path d="M943.3 522.9L939.4 523.4L940.9 519.8Z" fill="#7c8086" stroke="#f4f4f4" stroke-width="0.95"/><path d="M941.4 538.6L943.6 538.6L942.5 540.5Z" fill="#7c8086" stroke="#f4f4f4" stroke-width="0.95"/><path d="M960.2 422.9L957.8 426.2L956.1 422.5Z" fill="#7c8086" stroke="#f4f4f4" stroke-width="0.95"/><path d="M958.7 436.8L956.6 440.2L954.8 436.7Z" fill="#7c8086" stroke="#f4f4f4" stroke-width="0.95"/><path d="M963.8 455.7L965.7 454.1L966.1 456.5Z" fill="#7c8086" stroke="#f4f4f4" stroke-width="0.95"/><path d="M966.3 469.1L968.7 469.8L966.9 471.5Z" fill="#7c8086" stroke="#f4f4f4" stroke-width="0.95"/><path d="M954.4 484.1L956.1 486.2L953.4 486.6Z" fill="#7c8086" stroke="#f4f4f4" stroke-width="0.95"/><path d="M966.9 512.0L963.6 510.9L966.2 508.6Z" fill="#7c8086" stroke="#f4f4f4" stroke-width="0.95"/><path d="M960.2 520.3L958.4 518.2L961.1 517.8Z" fill="#7c8086" stroke="#f4f4f4" stroke-width="0.95"/><path d="M956.8 538.9L954.8 536.1L958.2 535.7Z" fill="#7c8086" stroke="#f4f4f4" stroke-width="0.95"/><path d="M960.4 558.8L959.3 562.0L957.1 559.5Z" fill="#7c8086" stroke="#f4f4f4" stroke-width="0.95"/><path d="M974.0 428.3L976.3 429.6L974.0 430.9Z" fill="#7c8086" stroke="#f4f4f4" stroke-width="0.95"/><path d="M970.2 447.8L972.2 445.3L973.3 448.2Z" fill="#7c8086" stroke="#f4f4f4" stroke-width="0.95"/><path d="M971.0 460.2L970.2 457.7L972.7 458.3Z" fill="#7c8086" stroke="#f4f4f4" stroke-width="0.95"/><path d="M971.9 469.8L973.1 472.1L970.5 472.0Z" fill="#7c8086" stroke="#f4f4f4" stroke-width="0.95"/><path d="M979.9 485.3L978.3 489.1L975.8 485.8Z" fill="#7c8086" stroke="#f4f4f4" stroke-width="0.95"/><path d="M982.4 522.1L980.6 524.7L979.3 521.9Z" fill="#7c8086" stroke="#f4f4f4" stroke-width="0.95"/><path d="M976.9 544.6L977.4 541.2L980.1 543.4Z" fill="#7c8086" stroke="#f4f4f4" stroke-width="0.95"/><path d="M978.8 556.3L978.5 559.8L975.6 557.9Z" fill="#7c8086" stroke="#f4f4f4" stroke-width="0.95"/><path d="M1000.5 418.1L1001.3 420.4L998.9 420.0Z" fill="#7c8086" stroke="#f4f4f4" stroke-width="0.95"/><path d="M990.9 437.7L992.3 441.2L988.6 440.6Z" fill="#7c8086" stroke="#f4f4f4" stroke-width="0.95"/><path d="M991.0 459.1L988.8 456.6L992.1 456.0Z" fill="#7c8086" stroke="#f4f4f4" stroke-width="0.95"/><path d="M987.5 473.6L989.7 476.0L986.5 476.7Z" fill="#7c8086" stroke="#f4f4f4" stroke-width="0.95"/><path d="M991.7 486.4L988.8 487.7L989.1 484.6Z" fill="#7c8086" stroke="#f4f4f4" stroke-width="0.95"/><path d="M993.8 503.2L994.2 505.4L992.1 504.8Z" fill="#7c8086" stroke="#f4f4f4" stroke-width="0.95"/><path d="M995.5 523.6L996.1 526.0L993.6 525.4Z" fill="#7c8086" stroke="#f4f4f4" stroke-width="0.95"/><path d="M990.9 536.8L990.5 533.5L993.6 534.8Z" fill="#7c8086" stroke="#f4f4f4" stroke-width="0.95"/><path d="M992.9 560.3L989.1 560.1L991.1 556.9Z" fill="#7c8086" stroke="#f4f4f4" stroke-width="0.95"/><path d="M1006.8 417.3L1009.8 419.6L1006.3 421.0Z" fill="#7c8086" stroke="#f4f4f4" stroke-width="0.95"/><path d="M1004.1 440.5L1004.6 438.1L1006.5 439.7Z" fill="#7c8086" stroke="#f4f4f4" stroke-width="0.95"/><path d="M1004.9 454.9L1006.8 458.6L1002.6 458.3Z" fill="#7c8086" stroke="#f4f4f4" stroke-width="0.95"/><path d="M1011.8 477.8L1009.3 478.5L1009.9 476.0Z" fill="#7c8086" stroke="#f4f4f4" stroke-width="0.95"/><path d="M1005.6 491.1L1004.9 488.2L1007.8 489.1Z" fill="#7c8086" stroke="#f4f4f4" stroke-width="0.95"/><path d="M1014.6 545.8L1013.1 543.7L1015.6 543.4Z" fill="#7c8086" stroke="#f4f4f4" stroke-width="0.95"/><path d="M1008.9 556.7L1007.3 559.0L1006.1 556.5Z" fill="#7c8086" stroke="#f4f4f4" stroke-width="0.95"/><path d="M1035.7 425.8L1032.9 426.6L1033.7 423.7Z" fill="#7c8086" stroke="#f4f4f4" stroke-width="0.95"/><path d="M1021.0 436.4L1024.0 438.9L1020.3 440.2Z" fill="#7c8086" stroke="#f4f4f4" stroke-width="0.95"/><path d="M1031.1 458.3L1032.5 454.7L1034.9 457.7Z" fill="#7c8086" stroke="#f4f4f4" stroke-width="0.95"/><path d="M1030.6 471.5L1030.8 469.0L1032.9 470.5Z" fill="#7c8086" stroke="#f4f4f4" stroke-width="0.95"/><path d="M1023.6 488.6L1021.5 486.4L1024.5 485.7Z" fill="#7c8086" stroke="#f4f4f4" stroke-width="0.95"/><path d="M1026.0 512.3L1029.2 514.4L1025.7 516.1Z" fill="#7c8086" stroke="#f4f4f4" stroke-width="0.95"/><path d="M1025.5 517.2L1027.7 518.9L1025.1 520.0Z" fill="#7c8086" stroke="#f4f4f4" stroke-width="0.95"/><path d="M1021.1 538.6L1019.8 536.0L1022.7 536.2Z" fill="#7c8086" stroke="#f4f4f4" stroke-width="0.95"/><path d="M1029.7 555.9L1030.1 553.5L1031.9 555.1Z" fill="#7c8086" stroke="#f4f4f4" stroke-width="0.95"/><path d="M1042.2 425.2L1044.7 428.2L1040.8 428.9Z" fill="#7c8086" stroke="#f4f4f4" stroke-width="0.95"/><path d="M1044.0 450.7L1043.2 453.4L1041.4 451.3Z" fill="#7c8086" stroke="#f4f4f4" stroke-width="0.95"/><path d="M1043.5 469.1L1044.5 466.7L1046.1 468.7Z" fill="#7c8086" stroke="#f4f4f4" stroke-width="0.95"/><path d="M1045.1 503.0L1044.7 500.0L1047.4 501.2Z" fill="#7c8086" stroke="#f4f4f4" stroke-width="0.95"/><path d="M1039.4 529.2L1037.8 526.0L1041.4 526.3Z" fill="#7c8086" stroke="#f4f4f4" stroke-width="0.95"/><path d="M1039.3 539.2L1038.1 535.9L1041.6 536.5Z" fill="#7c8086" stroke="#f4f4f4" stroke-width="0.95"/><path d="M1043.1 564.4L1041.5 562.3L1044.1 561.9Z" fill="#7c8086" stroke="#f4f4f4" stroke-width="0.95"/><rect x="1131.8" y="413.9" width="156.8" height="156.3" fill="none" stroke="#ffffff" stroke-width="1.3"/><path d="M1131.8 466.2A186 186 0 0 0 1184.1 413.9" fill="none" stroke="#e8e8e8" stroke-width="1.1"/><path d="M1131.8 518.4A416 416 0 0 0 1236.3 413.9" fill="none" stroke="#e8e8e8" stroke-width="1.1"/><path d="M1131.8 570.2A686 686 0 0 0 1288.6 413.9" fill="none" stroke="#e8e8e8" stroke-width="1.1"/><path d="M1184.1 570.2A522 522 0 0 0 1288.6 466.2" fill="none" stroke="#e8e8e8" stroke-width="1.1"/><path d="M1236.3 570.2A257 257 0 0 0 1288.6 518.4" fill="none" stroke="#e8e8e8" stroke-width="1.1"/><circle cx="1475" cy="484.3" r="131.2" fill="none" stroke="#ffffff" stroke-width="4.9"/><circle cx="1475" cy="484.3" r="112" fill="none" stroke="#e8e8e8" stroke-width="1.1"/><circle cx="1475" cy="484.3" r="87.5" fill="none" stroke="#e8e8e8" stroke-width="1.1"/><path d="M1388.6 388.3L1561.0 581.6" stroke="#e8e8e8" stroke-width="1.15"/><path d="M1475.0 484.3L1378.9 569.7" stroke="#e8e8e8" stroke-width="1.15"/><path d="M1476.0 483.3L1571.6 397.3" stroke="#ffffff" stroke-width="12.3"/><path d="M1673.0 507.3L1770.0 507.3" stroke="#e022e0" stroke-width="1.3"/><path d="M1721.5 459.0L1721.5 556.0" stroke="#e022e0" stroke-width="1.3"/><rect x="1718.2" y="504" width="6.6" height="6.6" fill="#212830" stroke="#e022e0" stroke-width="1.2"/><path d="M807.0 700.8L1433.9 896.6" stroke="#e8e8e8" stroke-width="1.15"/><path d="M1071.3 675.9L726.5 942.5" stroke="#e8e8e8" stroke-width="1.15"/><path d="M721.8 772.9L1317.4 1061.0" stroke="#e8e8e8" stroke-width="1.15"/><path d="M1207.2 741.2L954.4 994.8" stroke="#e8e8e8" stroke-width="1.15"/><defs><clipPath id="bkc"><path d="M972.3 752.4L1142.9 805.7L1028.0 921.0L859.6 839.6Z"/></clipPath></defs><path d="M700 694.6H1300M649.0 694.6V726.4M680.8 694.6V726.4M712.7 694.6V726.4M744.5 694.6V726.4M776.4 694.6V726.4M808.2 694.6V726.4M840.1 694.6V726.4M872.0 694.6V726.4M903.8 694.6V726.4M935.6 694.6V726.4M967.5 694.6V726.4M999.4 694.6V726.4M1031.2 694.6V726.4M1063.0 694.6V726.4M1094.9 694.6V726.4M1126.8 694.6V726.4M1158.6 694.6V726.4M1190.5 694.6V726.4M1222.3 694.6V726.4M1254.2 694.6V726.4M1286.0 694.6V726.4M1317.8 694.6V726.4M700 726.4H1300M633.1 726.4V758.3M664.9 726.4V758.3M696.8 726.4V758.3M728.6 726.4V758.3M760.5 726.4V758.3M792.3 726.4V758.3M824.2 726.4V758.3M856.0 726.4V758.3M887.9 726.4V758.3M919.7 726.4V758.3M951.6 726.4V758.3M983.4 726.4V758.3M1015.3 726.4V758.3M1047.1 726.4V758.3M1079.0 726.4V758.3M1110.8 726.4V758.3M1142.7 726.4V758.3M1174.5 726.4V758.3M1206.4 726.4V758.3M1238.2 726.4V758.3M1270.1 726.4V758.3M1301.9 726.4V758.3M700 758.3H1300M649.0 758.3V790.1M680.8 758.3V790.1M712.7 758.3V790.1M744.5 758.3V790.1M776.4 758.3V790.1M808.2 758.3V790.1M840.1 758.3V790.1M872.0 758.3V790.1M903.8 758.3V790.1M935.6 758.3V790.1M967.5 758.3V790.1M999.4 758.3V790.1M1031.2 758.3V790.1M1063.0 758.3V790.1M1094.9 758.3V790.1M1126.8 758.3V790.1M1158.6 758.3V790.1M1190.5 758.3V790.1M1222.3 758.3V790.1M1254.2 758.3V790.1M1286.0 758.3V790.1M1317.8 758.3V790.1M700 790.1H1300M633.1 790.1V822.0M664.9 790.1V822.0M696.8 790.1V822.0M728.6 790.1V822.0M760.5 790.1V822.0M792.3 790.1V822.0M824.2 790.1V822.0M856.0 790.1V822.0M887.9 790.1V822.0M919.7 790.1V822.0M951.6 790.1V822.0M983.4 790.1V822.0M1015.3 790.1V822.0M1047.1 790.1V822.0M1079.0 790.1V822.0M1110.8 790.1V822.0M1142.7 790.1V822.0M1174.5 790.1V822.0M1206.4 790.1V822.0M1238.2 790.1V822.0M1270.1 790.1V822.0M1301.9 790.1V822.0M700 822.0H1300M649.0 822.0V853.9M680.8 822.0V853.9M712.7 822.0V853.9M744.5 822.0V853.9M776.4 822.0V853.9M808.2 822.0V853.9M840.1 822.0V853.9M872.0 822.0V853.9M903.8 822.0V853.9M935.6 822.0V853.9M967.5 822.0V853.9M999.4 822.0V853.9M1031.2 822.0V853.9M1063.0 822.0V853.9M1094.9 822.0V853.9M1126.8 822.0V853.9M1158.6 822.0V853.9M1190.5 822.0V853.9M1222.3 822.0V853.9M1254.2 822.0V853.9M1286.0 822.0V853.9M1317.8 822.0V853.9M700 853.8H1300M633.1 853.8V885.7M664.9 853.8V885.7M696.8 853.8V885.7M728.6 853.8V885.7M760.5 853.8V885.7M792.3 853.8V885.7M824.2 853.8V885.7M856.0 853.8V885.7M887.9 853.8V885.7M919.7 853.8V885.7M951.6 853.8V885.7M983.4 853.8V885.7M1015.3 853.8V885.7M1047.1 853.8V885.7M1079.0 853.8V885.7M1110.8 853.8V885.7M1142.7 853.8V885.7M1174.5 853.8V885.7M1206.4 853.8V885.7M1238.2 853.8V885.7M1270.1 853.8V885.7M1301.9 853.8V885.7M700 885.7H1300M649.0 885.7V917.5M680.8 885.7V917.5M712.7 885.7V917.5M744.5 885.7V917.5M776.4 885.7V917.5M808.2 885.7V917.5M840.1 885.7V917.5M872.0 885.7V917.5M903.8 885.7V917.5M935.6 885.7V917.5M967.5 885.7V917.5M999.4 885.7V917.5M1031.2 885.7V917.5M1063.0 885.7V917.5M1094.9 885.7V917.5M1126.8 885.7V917.5M1158.6 885.7V917.5M1190.5 885.7V917.5M1222.3 885.7V917.5M1254.2 885.7V917.5M1286.0 885.7V917.5M1317.8 885.7V917.5M700 917.5H1300M633.1 917.5V949.4M664.9 917.5V949.4M696.8 917.5V949.4M728.6 917.5V949.4M760.5 917.5V949.4M792.3 917.5V949.4M824.2 917.5V949.4M856.0 917.5V949.4M887.9 917.5V949.4M919.7 917.5V949.4M951.6 917.5V949.4M983.4 917.5V949.4M1015.3 917.5V949.4M1047.1 917.5V949.4M1079.0 917.5V949.4M1110.8 917.5V949.4M1142.7 917.5V949.4M1174.5 917.5V949.4M1206.4 917.5V949.4M1238.2 917.5V949.4M1270.1 917.5V949.4M1301.9 917.5V949.4M700 949.4H1300M649.0 949.4V981.2M680.8 949.4V981.2M712.7 949.4V981.2M744.5 949.4V981.2M776.4 949.4V981.2M808.2 949.4V981.2M840.1 949.4V981.2M872.0 949.4V981.2M903.8 949.4V981.2M935.6 949.4V981.2M967.5 949.4V981.2M999.4 949.4V981.2M1031.2 949.4V981.2M1063.0 949.4V981.2M1094.9 949.4V981.2M1126.8 949.4V981.2M1158.6 949.4V981.2M1190.5 949.4V981.2M1222.3 949.4V981.2M1254.2 949.4V981.2M1286.0 949.4V981.2M1317.8 949.4V981.2M700 981.2H1300M633.1 981.2V1013.1M664.9 981.2V1013.1M696.8 981.2V1013.1M728.6 981.2V1013.1M760.5 981.2V1013.1M792.3 981.2V1013.1M824.2 981.2V1013.1M856.0 981.2V1013.1M887.9 981.2V1013.1M919.7 981.2V1013.1M951.6 981.2V1013.1M983.4 981.2V1013.1M1015.3 981.2V1013.1M1047.1 981.2V1013.1M1079.0 981.2V1013.1M1110.8 981.2V1013.1M1142.7 981.2V1013.1M1174.5 981.2V1013.1M1206.4 981.2V1013.1M1238.2 981.2V1013.1M1270.1 981.2V1013.1M1301.9 981.2V1013.1" fill="none" stroke="#e8e8e8" stroke-width="1.1" clip-path="url(#bkc)"/></svg>
<div class="r" style="left:478px;top:996px;width:28.2px;height:67.8px;background:rgba(46,53,71,0.72);"></div>
<div class="r" style="left:480.5px;top:1001.2px;width:1.8px;height:1.8px;background:#d8dce4;"></div>
<div class="r" style="left:480.5px;top:1005px;width:1.8px;height:1.8px;background:#d8dce4;"></div>
<div class="r" style="left:484.1px;top:1001.2px;width:1.8px;height:1.8px;background:#d8dce4;"></div>
<div class="r" style="left:484.1px;top:1005px;width:1.8px;height:1.8px;background:#d8dce4;"></div>
<div class="r" style="left:487.7px;top:1001.2px;width:1.8px;height:1.8px;background:#d8dce4;"></div>
<div class="r" style="left:487.7px;top:1005px;width:1.8px;height:1.8px;background:#d8dce4;"></div>
<div class="r" style="left:491.3px;top:1001.2px;width:1.8px;height:1.8px;background:#d8dce4;"></div>
<div class="r" style="left:491.3px;top:1005px;width:1.8px;height:1.8px;background:#d8dce4;"></div>
<div class="r" style="left:494.9px;top:1001.2px;width:1.8px;height:1.8px;background:#d8dce4;"></div>
<div class="r" style="left:494.9px;top:1005px;width:1.8px;height:1.8px;background:#d8dce4;"></div>
<div class="r" style="left:498.5px;top:1001.2px;width:1.8px;height:1.8px;background:#d8dce4;"></div>
<div class="r" style="left:498.5px;top:1005px;width:1.8px;height:1.8px;background:#d8dce4;"></div>
<svg class="r" style="left:478px;top:996px;" width="28" height="67" viewBox="0 0 28 67"><path d="M4.8 21.5L14.8 31M14.8 21.5L4.8 31" stroke="#e4e4e4" stroke-width="2"/><path d="M3.8 62L12.5 53.3" stroke="#a9abae" stroke-width="3.4" stroke-linecap="round"/><circle cx="15.2" cy="50.6" r="5" fill="#a9abae"/><path d="M15.2 50.6L22 43.8" stroke="#2b3241" stroke-width="3.6"/></svg>
<div class="r" style="left:506.2px;top:996px;width:503.4px;height:41.5px;background:#9a9c9f;"></div>
<div class="r" style="left:506.2px;top:1037.3px;width:503.4px;height:24.5px;background:#c1c2c4;border-top:1.2px solid #6f7175;border-radius:0 0 2px 2px;box-sizing:border-box;"></div>
<span class="t" style="left:509.40px;top:1000.70px;font-size:15px;line-height:15px;color:#161616;font-family:'Liberation Mono',monospace;">View/World/X/Y/Z/ZAxis] &lt;World&gt;: world</span>
<span class="t" style="left:509.40px;top:1019.30px;font-size:15px;line-height:15px;color:#161616;font-family:'Liberation Mono',monospace;">Command: 39</span>
<svg class="r" style="left:510.9px;top:1042px;" width="21" height="16" viewBox="0 0 21 16"><rect x="0.6" y="0.6" width="19.4" height="14.6" fill="#b4b5b8" stroke="#5c5e62" stroke-width="1.2"/><rect x="0.6" y="0.6" width="19.4" height="3.4" fill="#5c5e62"/><path d="M3 7L6 9.3L3 11.6M7.5 12H12" fill="none" stroke="#4a4c50" stroke-width="1.1"/></svg>
<svg class="r" style="left:533.6px;top:1047.8px;" width="8.8" height="5" viewBox="0 0 8.8 5"><path d="M0 0H8.8L4.4 5Z" fill="#555659"/></svg>
<span class="t" style="left:551.80px;top:1043.50px;font-size:15px;line-height:15px;color:#77797d;font-style:italic;font-family:'Liberation Mono',monospace;">Type a command</span>
<svg class="r" style="left:995px;top:1048.3px;" width="10" height="4.6" viewBox="0 0 10 4.6"><path d="M0 4.6H10L5 0Z" fill="#55575a"/></svg>
<div class="r" style="left:0px;top:1107.4px;width:1918px;height:32.6px;background:#262d38;"></div>
<div class="r" style="left:0px;top:1107.6px;width:1104.7px;height:30.2px;background:#3b4453;"></div>
<div class="r" style="left:1110.7px;top:1107.6px;width:59.4px;height:30.2px;background:#3b4453;"></div>
<div class="r" style="left:1173.1px;top:1107.6px;width:79.9px;height:30.2px;background:#3b4453;"></div>
<div class="r" style="left:1256px;top:1107.6px;width:29.5px;height:30.2px;background:#3b4453;"></div>
<div class="r" style="left:1287.3px;top:1107.6px;width:129.5px;height:30.2px;background:#3b4453;"></div>
<div class="r" style="left:1418.5px;top:1107.6px;width:79.1px;height:30.2px;background:#3b4453;"></div>
<div class="r" style="left:1501.2px;top:1107.6px;width:131.6px;height:30.2px;background:#3b4453;"></div>
<div class="r" style="left:1636.2px;top:1107.6px;width:49.7px;height:30.2px;background:#3b4453;"></div>
<div class="r" style="left:1687.5px;top:1107.6px;width:29.7px;height:30.2px;background:#3b4453;"></div>
<div class="r" style="left:1719.9px;top:1107.6px;width:31.2px;height:30.2px;background:#3b4453;"></div>
<div class="r" style="left:1754px;top:1107.6px;width:102px;height:30.2px;background:#3b4453;"></div>
<div class="r" style="left:1859.3px;top:1107.6px;width:58.7px;height:30.2px;background:#3b4453;"></div>
<div class="r" style="left:1448.9px;top:1108.6px;width:28px;height:28.6px;background:#5b8ac6;"></div>
<div class="r" style="left:1501.2px;top:1108.6px;width:29px;height:28.6px;background:#5b8ac6;"></div>
<span class="t" style="left:1115.40px;top:1116.50px;font-size:15px;line-height:15px;color:#e6e6e6;letter-spacing:-0.708px;transform:scaleY(1.16);transform-origin:0 12.7px;">MODEL</span>
<span class="t" style="left:1597.80px;top:1118.32px;font-size:12.5px;line-height:12.5px;color:#e6e6e6;letter-spacing:-0.459px;transform:scaleY(1.3);transform-origin:0 10.58px;">1:1</span>
<svg class="r" style="left:1238px;top:1120.3px;" width="10" height="5" viewBox="0 0 10 5"><path d="M0 0H10L5 5Z" fill="#d8d8d8"/></svg>
<svg class="r" style="left:1352px;top:1120.3px;" width="10" height="5" viewBox="0 0 10 5"><path d="M0 0H10L5 5Z" fill="#d8d8d8"/></svg>
<svg class="r" style="left:1402px;top:1120.3px;" width="10" height="5" viewBox="0 0 10 5"><path d="M0 0H10L5 5Z" fill="#d8d8d8"/></svg>
<svg class="r" style="left:1483px;top:1120.3px;" width="10" height="5" viewBox="0 0 10 5"><path d="M0 0H10L5 5Z" fill="#d8d8d8"/></svg>
<svg class="r" style="left:1618.8px;top:1120.3px;" width="10" height="5" viewBox="0 0 10 5"><path d="M0 0H10L5 5Z" fill="#d8d8d8"/></svg>
<svg class="r" style="left:1671.2px;top:1120.3px;" width="10" height="5" viewBox="0 0 10 5"><path d="M0 0H10L5 5Z" fill="#d8d8d8"/></svg>
<svg class="r" style="left:0px;top:0px;" width="1918" height="1140" viewBox="0 0 1918 1140"><path d="M1182.3 1113.2L1182.3 1131.8" stroke="#e8e8e8" stroke-width="1.1"/><path d="M1187.6 1113.2L1187.6 1131.8" stroke="#e8e8e8" stroke-width="1.1"/><path d="M1193.0 1113.2L1193.0 1131.8" stroke="#e8e8e8" stroke-width="1.1"/><path d="M1178.0 1117.4L1197.3 1117.4" stroke="#e8e8e8" stroke-width="1.1"/><path d="M1178.0 1122.4L1197.3 1122.4" stroke="#e8e8e8" stroke-width="1.1"/><path d="M1178.0 1127.5L1197.3 1127.5" stroke="#e8e8e8" stroke-width="1.1"/><rect x="1210.5" y="1115.9" width="2.6" height="2.6" fill="#e8e8e8"/><rect x="1210.5" y="1121.5" width="2.6" height="2.6" fill="#e8e8e8"/><rect x="1210.5" y="1127.1" width="2.6" height="2.6" fill="#e8e8e8"/><rect x="1216.5" y="1115.9" width="2.6" height="2.6" fill="#e8e8e8"/><rect x="1216.5" y="1121.5" width="2.6" height="2.6" fill="#e8e8e8"/><rect x="1216.5" y="1127.1" width="2.6" height="2.6" fill="#e8e8e8"/><rect x="1222.5" y="1115.9" width="2.6" height="2.6" fill="#e8e8e8"/><rect x="1222.5" y="1121.5" width="2.6" height="2.6" fill="#e8e8e8"/><rect x="1222.5" y="1127.1" width="2.6" height="2.6" fill="#e8e8e8"/><path d="M1265.0 1115.5L1265.0 1125.0" stroke="#e8e8e8" stroke-width="1.3"/><path d="M1260.3 1120.2L1269.7 1120.2" stroke="#e8e8e8" stroke-width="1.3"/><rect x="1268" y="1125.4" width="13.3" height="5" fill="#e8e8e8"/><rect x="1269" y="1126.4" width="2.2" height="3" fill="#3b4453"/><path d="M1292.4 1113.2V1132.6H1312" fill="none" stroke="#e8e8e8" stroke-width="1.2"/><rect x="1292.4" y="1127" width="5.6" height="5.6" fill="none" stroke="#e8e8e8" stroke-width="1"/><circle cx="1329.8" cy="1122.8" r="7.4" fill="none" stroke="#cfcfcf" stroke-width="1.2"/><path d="M1329.8 1122.8L1339.0 1114.5" stroke="#e8e8e8" stroke-width="1.2"/><path d="M1329.8 1122.8L1342.0 1122.8" stroke="#e8e8e8" stroke-width="1.2"/><path d="M1382.6 1113.0L1382.6 1133.0" stroke="#3fc470" stroke-width="1.3"/><path d="M1374.3 1114.5L1389.0 1129.5" stroke="#e04b4b" stroke-width="1.3"/><rect x="1380.3" y="1120.7" width="4.4" height="4.4" fill="#3b4453" stroke="#e8e8e8" stroke-width="1"/><path d="M1423.2 1130.3L1438.2 1115.3" stroke="#e8e8e8" stroke-width="1.2"/><path d="M1422.5 1130.3L1443.0 1130.3" stroke="#aeb3bc" stroke-width="1.2"/><rect x="1428.8" y="1120.6" width="4.4" height="4.4" fill="#e8e8e8"/><rect x="1455.5" y="1116.3" width="17" height="16" fill="none" stroke="#ffffff" stroke-width="1.3"/><rect x="1453" y="1113.7" width="5" height="5" fill="#5b8ac6" stroke="#ffffff" stroke-width="1.1"/><path d="M1513.5 1113.3L1516.5 1123.0L1522.1 1130.6L1520.7 1132.6L1515.7 1128.6L1515.2 1133.2L1513.5 1130.6L1511.8 1133.2L1511.3 1128.6L1506.3 1132.6L1504.9 1130.6L1510.5 1123.0Z" fill="#ffffff"/><circle cx="1522.5" cy="1116.5" r="2.6" fill="none" stroke="#ffffff" stroke-width="1.1"/><path d="M1543.5 1113.3L1546.5 1123.0L1552.1 1130.6L1550.7 1132.6L1545.7 1128.6L1545.2 1133.2L1543.5 1130.6L1541.8 1133.2L1541.3 1128.6L1536.3 1132.6L1534.9 1130.6L1540.5 1123.0Z" fill="#d4d4d4"/><path d="M1553.5 1112.5L1550 1117.5H1552.5L1551 1121.5L1555.5 1116H1553L1555 1112.5Z" fill="#d4d4d4"/><path d="M1575.5 1113.3L1578.5 1123.0L1584.1 1130.6L1582.7 1132.6L1577.7 1128.6L1577.2 1133.2L1575.5 1130.6L1573.8 1133.2L1573.3 1128.6L1568.3 1132.6L1566.9 1130.6L1572.5 1123.0Z" fill="#d4d4d4"/><path d="M1655.42 1122.90L1661.30 1122.90" stroke="#dcdcdc" stroke-width="4.3"/><path d="M1654.15 1125.95L1658.31 1130.11" stroke="#dcdcdc" stroke-width="4.3"/><path d="M1651.10 1127.22L1651.10 1133.10" stroke="#dcdcdc" stroke-width="4.3"/><path d="M1648.05 1125.95L1643.89 1130.11" stroke="#dcdcdc" stroke-width="4.3"/><path d="M1646.78 1122.90L1640.90 1122.90" stroke="#dcdcdc" stroke-width="4.3"/><path d="M1648.05 1119.85L1643.89 1115.69" stroke="#dcdcdc" stroke-width="4.3"/><path d="M1651.10 1118.58L1651.10 1112.70" stroke="#dcdcdc" stroke-width="4.3"/><path d="M1654.15 1119.85L1658.31 1115.69" stroke="#dcdcdc" stroke-width="4.3"/><circle cx="1651.1" cy="1122.9" r="5.2" fill="none" stroke="#dcdcdc" stroke-width="4"/><path d="M1701.6 1113.3L1701.6 1132.5" stroke="#e8e8e8" stroke-width="2.6"/><path d="M1692.0 1122.9L1711.2 1122.9" stroke="#e8e8e8" stroke-width="2.6"/><rect x="1725.6" y="1114.6" width="6.4" height="6.2" fill="none" stroke="#e8e8e8" stroke-width="1.1"/><circle cx="1740.4" cy="1121.8" r="4" fill="none" stroke="#e8e8e8" stroke-width="1.1"/><path d="M1732.8 1126.2L1737.3 1132.9H1728.3Z" fill="none" stroke="#e8e8e8" stroke-width="1.1"/><path d="M1758 1111H1772L1778.5 1117V1133H1758Z" fill="#2f6cb0"/><path d="M1758 1124.5H1768L1778.5 1129V1133H1758Z" fill="#f0b323"/><path d="M1764.5 1111V1123M1758 1117H1771" stroke="#cfe0f2" stroke-width="1.3"/><circle cx="1764.5" cy="1117" r="1.8" fill="#2f6cb0" stroke="#e8f0fa" stroke-width="0.9"/><path d="M1768.5 1128.5L1772.5 1133L1781.5 1124" fill="none" stroke="#3fc470" stroke-width="2.8"/><rect x="1792" y="1113.3" width="19.8" height="16" fill="#c8c8c8"/><path d="M1794 1128C1797 1112 1800 1112 1803 1123S1808 1118 1811 1114" fill="none" stroke="#6a6a6a" stroke-width="1.1"/><circle cx="1798" cy="1116" r="1.3" fill="#5ab0ee"/><path d="M1806.5 1122.5L1812 1133H1801Z" fill="#f2a477"/><path d="M1806.5 1126V1130" stroke="#fff" stroke-width="1.1"/><path d="M1837 1113.5A8.3 8.3 0 0 1 1845.3 1122" fill="none" stroke="#d8d8d8" stroke-width="1.3"/><path d="M1836.5 1116V1122H1841" fill="none" stroke="#d8d8d8" stroke-width="1.1"/><path d="M1826 1119H1832L1835.5 1122V1132.5H1826Z" fill="#2f6cb0"/><path d="M1826 1128L1835.5 1128.8V1132.5H1826Z" fill="#f0b323"/><path d="M1829 1119V1126M1826 1122.5H1832" stroke="#cfe0f2" stroke-width="1"/><circle cx="1841.5" cy="1129.5" r="4.3" fill="#3b8fe0"/><path d="M1841.5 1128.5V1132" stroke="#fff" stroke-width="1.2"/><circle cx="1841.5" cy="1126.8" r="0.7" fill="#fff"/><rect x="1865" y="1116" width="18.5" height="13.3" fill="none" stroke="#e8e8e8" stroke-width="1.2"/><path d="M1868.5 1126.3L1872.5 1122.5M1880 1119L1876 1122.8" stroke="#e8e8e8" stroke-width="1.1"/><path d="M1868 1127V1123.3L1871.5 1127ZM1880.7 1118.3V1122L1877 1118.3Z" fill="#e8e8e8"/><rect x="1894" y="1114.3" width="20" height="2.5" fill="#e8e8e8"/><rect x="1894" y="1121.7" width="20" height="2.5" fill="#e8e8e8"/><rect x="1894" y="1129.1" width="20" height="2.5" fill="#e8e8e8"/></svg>
<svg class="r" style="left:0px;top:0px;" width="1918" height="1140" viewBox="0 0 1918 1140"><path d="M1562 970.7H1903Q1919.5 970.7 1919.5 987V1079Q1919.5 1095.2 1903 1095.2H1832.8V1118.6L1810.5 1095.2H1562Q1545.9 1095.2 1545.9 1079V987Q1545.9 970.7 1562 970.7Z" fill="#ffffe1" stroke="#1e1e1e" stroke-width="1.1"/><defs><radialGradient id="ig" cx="0.4" cy="0.3" r="0.8"><stop offset="0" stop-color="#6f9cf0"/><stop offset="1" stop-color="#1f45b5"/></radialGradient></defs><circle cx="1567" cy="992.6" r="8.6" fill="url(#ig)" stroke="#b8c8e8" stroke-width="0.8"/><rect x="1565.9" y="990.8" width="2.3" height="6.2" fill="#fff"/><circle cx="1567" cy="988.2" r="1.4" fill="#fff"/><rect x="1890.3" y="984" width="18.7" height="18.5" fill="#ffffff" stroke="#5a5a5a" stroke-width="1.1"/><path d="M1894.3 988L1905 998.5M1905 988L1894.3 998.5" stroke="#1a1a1a" stroke-width="1.7"/></svg>
<span class="t" style="left:1591.30px;top:985.50px;font-size:15px;line-height:15px;color:#000000;letter-spacing:-0.020px;font-weight:700;">View Drawing History</span>
<span class="t" style="left:1564.00px;top:1014.10px;font-size:15px;line-height:15px;color:#111111;letter-spacing:-0.133px;">You can view and compare previous versions in the</span>
<span class="t" style="left:1564.00px;top:1034.10px;font-size:15px;line-height:15px;color:#111111;letter-spacing:0.051px;">Drawing History palette by signing into OneDrive.</span>
<span class="t" style="left:1564.00px;top:1061.80px;font-size:15px;line-height:15px;color:#0000ee;letter-spacing:-0.066px;text-decoration:underline;">Sign in to OneDrive</span>
</body></html>
